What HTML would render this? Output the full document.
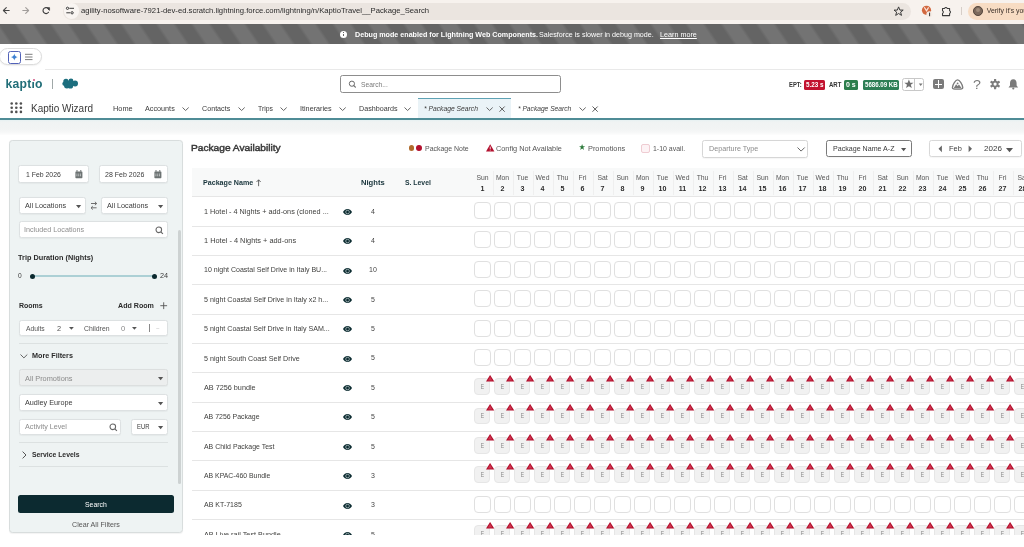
<!DOCTYPE html>
<html><head><meta charset="utf-8">
<style>
*{margin:0;padding:0;box-sizing:border-box}
html,body{width:1024px;height:547px;overflow:hidden;background:#fff;font-family:"Liberation Sans",sans-serif;color:#3e3e3c}
.a{position:absolute}
.t{position:absolute;white-space:nowrap;line-height:1}
svg{position:absolute;overflow:visible}
.inp{position:absolute;background:#fff;border:1px solid #dde1e2;border-radius:2.5px;box-shadow:0 0.5px 1px rgba(0,0,0,.04)}
.cell{position:absolute;width:16.8px;height:17px;border:1px solid #e0e0e0;border-radius:4px;background:#fff}
.ce{position:absolute;width:15.8px;height:16.8px;border-radius:4px;background:#f1f1f1;border:1px solid #e6e6e6}
.ce span{position:absolute;left:0.8px;right:0;top:3.8px;text-align:center;font-size:7px;line-height:1;color:#858585;transform:scaleX(0.72)}
.sep{position:absolute;height:1px;background:#e5e5e5}
body{filter:blur(0.3px)}
</style></head><body>

<div class="a" style="left:0px;top:0px;width:1024px;height:23.5px;background:#f7f2ee"></div>
<svg style="left:0px;top:0px" width="60" height="23"><g fill="none" stroke-linecap="round" stroke-linejoin="round"><path d="M9.2 10.5H3.6M6.3 7.7L3.4 10.5L6.3 13.3" stroke="#474747" stroke-width="1.1"/><path d="M22.8 10.5H28.4M25.7 7.7L28.6 10.5L25.7 13.3" stroke="#a19d9a" stroke-width="1.1"/><path d="M48.8 9.5A3 3 0 1 0 48.5 12.3" stroke="#3a3a3a" stroke-width="1.1"/><path d="M47 7.6L49.6 7.6L49.6 10.2Z" fill="#3a3a3a" stroke="#3a3a3a" stroke-width="0.5"/></g></svg>
<div class="a" style="left:63px;top:2.5px;width:848px;height:17px;border-radius:9px;background:#ebe5e0"></div>
<div class="a" style="left:63.5px;top:3px;width:15px;height:16px;border-radius:8px;background:#f9f5f2"></div>
<svg style="left:0px;top:0px" width="80" height="23"><g stroke="#3a3a3a" stroke-width="1" fill="none"><path d="M69.3 8.3H74M66.3 12.8H70.2"/><circle cx="67.5" cy="8.3" r="1.15"/><circle cx="72.1" cy="12.8" r="1.15"/></g></svg>
<div class="t" style="left:80.58px;top:7.00px;font-size:7.4px;color:#2a2a2a;transform:scaleX(1.0391);transform-origin:0 0;">agility-nosoftware-7921-dev-ed.scratch.lightning.force.com/lightning/n/KaptioTravel__Package_Search</div>
<svg style="left:893px;top:5.8px" width="12" height="11"><path d="M5.6 0.9L6.9 4.1H10.2L7.6 6.1L8.5 9.4L5.6 7.5L2.7 9.4L3.6 6.1L1 4.1H4.3Z" fill="none" stroke="#3a3a3a" stroke-width="1" stroke-linejoin="round"/></svg>
<svg style="left:920px;top:4px" width="14" height="15"><circle cx="6.5" cy="6.3" r="4.6" fill="#d2683f"/><path d="M4.3 3.2L6.5 6.8L8.6 3.4" stroke="#fbe3da" stroke-width="1.2" fill="none"/><circle cx="9.4" cy="10.2" r="3" fill="#f5ece6"/><rect x="9.1" y="8.6" width="1" height="3.6" fill="#333"/></svg>
<svg style="left:940px;top:5px" width="14" height="13"><path d="M2.5 3.4H4.6A1.4 1.4 0 0 1 7.2 3.4H9.6V5.8A1.4 1.4 0 0 1 9.6 8.4V10.6H2.5V8.4A1.4 1.4 0 0 0 2.5 5.8Z" fill="none" stroke="#3a3a3a" stroke-width="1.05" stroke-linejoin="round"/></svg>
<div class="a" style="left:960.6px;top:7px;width:0.8px;height:8px;background:#d6cec8"></div>
<div class="a" style="left:968px;top:2.5px;width:70px;height:17px;border-radius:9px;background:#f7dcc3"></div>
<div class="a" style="left:972.8px;top:5.8px;width:9.8px;height:9.8px;border-radius:50%;background:#7d6a5c;border:1px solid #4d3f36"></div>
<div class="a" style="left:975.6px;top:8px;width:4.2px;height:4.2px;border-radius:50%;background:#a08c7a"></div>
<div class="t" style="left:986.72px;top:8.00px;font-size:6.9px;color:#3a2f28;">Verify it's you</div>
<div class="a" style="left:0px;top:23.5px;width:1024px;height:20px;background:repeating-linear-gradient(56deg,#646464 -18.33px,#646464 -6.73px,#737373 -3.73px,#737373 7.97px,#646464 10.94px)"></div>
<div class="a" style="left:340.2px;top:30.6px;width:7px;height:7px;border-radius:50%;background:#fff"></div>
<div class="a" style="left:343.2px;top:33.6px;width:1px;height:2.9px;background:#666"></div>
<div class="a" style="left:343.2px;top:32.1px;width:1px;height:1px;background:#666"></div>
<div class="t" style="left:354.70px;top:32.00px;font-size:7.1px;font-weight:bold;color:#fff;transform:scaleX(1.0080);transform-origin:0 0;">Debug mode enabled for Lightning Web Components.</div>
<div class="t" style="left:539.30px;top:32.00px;font-size:7.1px;color:#fff;transform:scaleX(1.0070);transform-origin:0 0;">Salesforce is slower in debug mode.</div>
<div class="t" style="left:660.30px;top:32.00px;font-size:7.1px;color:#fff;transform:scaleX(1.0149);transform-origin:0 0;text-decoration:underline;">Learn more</div>
<div class="a" style="left:-1.5px;top:48px;width:43px;height:17px;border:1px solid #dcdcdc;border-radius:9px;background:#fff;box-shadow:0 1px 1.5px rgba(0,0,0,.06)"></div>
<div class="a" style="left:8px;top:50.5px;width:12.6px;height:13px;border:1.4px solid #5262b8;border-radius:2.4px;background:#fff"></div>
<svg style="left:0px;top:0px" width="40" height="70"><path d="M14.3 53.4Q14.8 56.5 17.8 57Q14.8 57.5 14.3 60.6Q13.8 57.5 10.8 57Q13.8 56.5 14.3 53.4Z" fill="#3f82d2"/><path d="M25 54.3H32.5M25 57H32.5M25 59.6H32.5" stroke="#505050" stroke-width="0.75"/></svg>
<div class="a" style="left:45px;top:69px;width:979px;height:1px;background:#e9e9e9"></div>
<div class="t" style="left:5.4px;top:78px;font-size:12.2px;font-weight:bold;color:#216e78;letter-spacing:0.25px">kaptio</div>
<div class="a" style="left:31.2px;top:78px;width:4px;height:3.9px;background:#fff"></div>
<div class="a" style="left:32.5px;top:79px;width:2px;height:2px;border-radius:50%;background:#cf4f7f"></div>
<div class="a" style="left:51.6px;top:79px;width:1px;height:10px;background:#a0a8a8"></div>
<svg style="left:58px;top:74px" width="26" height="20"><g fill="#1c6e7e"><circle cx="8.00" cy="7.40" r="2.7"/><circle cx="13.00" cy="7.00" r="2.4"/><circle cx="17.10" cy="9.50" r="2.9"/><circle cx="8.90" cy="11.60" r="2.9"/><circle cx="12.40" cy="11.90" r="2.7"/><circle cx="6.40" cy="9.80" r="2.1"/><circle cx="12.50" cy="9.50" r="3.2"/></g></svg>
<div class="a" style="left:339.5px;top:75.2px;width:221px;height:17.6px;border:1px solid #8d8d8d;border-radius:2.5px;background:#fff"></div>
<svg style="left:347.6px;top:80.2px" width="10" height="9"><circle cx="3.9" cy="3.7" r="2.6" fill="none" stroke="#6a6a6a" stroke-width="1"/><path d="M5.8 5.6L7.4 7.2" stroke="#6a6a6a" stroke-width="1.2" stroke-linecap="round"/></svg>
<div class="t" style="left:360.52px;top:82.00px;font-size:6.9px;color:#7a7a7a;transform:scaleX(0.9715);transform-origin:0 0;">Search...</div>
<div class="t" style="left:788.65px;top:82.00px;font-size:6.4px;font-weight:bold;color:#333;transform:scaleX(0.9206);transform-origin:0 0;">EPT:</div>
<div class="a" style="left:804px;top:80px;width:21px;height:10px;border-radius:1.5px;background:#c2122f"></div>
<div class="t" style="left:805.75px;top:82.00px;font-size:6.4px;font-weight:bold;color:#fff;transform:scaleX(0.9873);transform-origin:0 0;">5.23 s</div>
<div class="t" style="left:829.35px;top:82.00px;font-size:6.4px;font-weight:bold;color:#333;transform:scaleX(0.9403);transform-origin:0 0;">ART</div>
<div class="a" style="left:844.2px;top:80px;width:14px;height:10px;border-radius:1.5px;background:#2d7e4c"></div>
<div class="t" style="left:846.35px;top:82.00px;font-size:6.4px;font-weight:bold;color:#fff;transform:scaleX(1.0979);transform-origin:0 0;">0 s</div>
<div class="a" style="left:863.2px;top:80px;width:36px;height:10px;border-radius:1.5px;background:#2e7e55"></div>
<div class="t" style="left:864.85px;top:82.00px;font-size:6.4px;font-weight:bold;color:#fff;transform:scaleX(0.9593);transform-origin:0 0;">5686.09 KB</div>
<div class="a" style="left:902px;top:77.5px;width:22px;height:13px;border:1px solid #c8c8c8;border-radius:2.5px;background:#fff"></div>
<div class="a" style="left:914.2px;top:78px;width:0.8px;height:12px;background:#c8c8c8"></div>
<svg style="left:902px;top:77px" width="24" height="14"><path d="M6.9 2.4L8.2 5.7H11.5L8.8 7.8L9.8 11.1L6.9 9.2L4 11.1L5 7.8L2.3 5.7H5.6Z" fill="#6f6f6f"/><path d="M16.8 6.6H20.6L18.7 8.9Z" fill="#777"/></svg>
<div class="a" style="left:933.3px;top:78.6px;width:10.9px;height:10.9px;border-radius:2px;background:#7b7b7b"></div>
<div class="a" style="left:938.2px;top:80.4px;width:1.1px;height:7.3px;background:#fff"></div>
<div class="a" style="left:935.1px;top:83.5px;width:7.3px;height:1.1px;background:#fff"></div>
<svg style="left:951.8px;top:78.6px" width="12" height="11"><path d="M5.6 0.9C7.6 0.9 10.6 5.6 10.8 8.6C10.9 9.9 9.6 10.2 5.6 10.2C1.6 10.2 0.3 9.9 0.4 8.6C0.6 5.6 3.6 0.9 5.6 0.9Z" fill="none" stroke="#7b7b7b" stroke-width="1.3"/><path d="M1.6 9.2L4.1 5.3L5.6 7.1L7 5.4L9.7 9.2Z" fill="#7b7b7b"/><circle cx="5.6" cy="4.4" r="0.9" fill="#7b7b7b"/></svg>
<div class="t" style="left:973.16px;top:79.00px;font-size:12px;color:#7b7b7b;transform:scaleX(1.1897);transform-origin:0 0;">?</div>
<svg style="left:990px;top:78.6px" width="11" height="11"><g fill="#7b7b7b" transform="translate(5.1 5.1)"><rect x="-1.1" y="-5.2" width="2.2" height="2.6" rx="0.4" transform="rotate(0)"/><rect x="-1.1" y="-5.2" width="2.2" height="2.6" rx="0.4" transform="rotate(60)"/><rect x="-1.1" y="-5.2" width="2.2" height="2.6" rx="0.4" transform="rotate(120)"/><rect x="-1.1" y="-5.2" width="2.2" height="2.6" rx="0.4" transform="rotate(180)"/><rect x="-1.1" y="-5.2" width="2.2" height="2.6" rx="0.4" transform="rotate(240)"/><rect x="-1.1" y="-5.2" width="2.2" height="2.6" rx="0.4" transform="rotate(300)"/><circle r="3.4"/></g><circle cx="5.1" cy="5.1" r="1.6" fill="#fff"/></svg>
<svg style="left:1006.5px;top:78px" width="13" height="13"><path d="M6.3 1.2C8.7 1.2 9.6 3 9.6 5.3V7.6L11.1 9.4H1.5L3 7.6V5.3C3 3 3.9 1.2 6.3 1.2Z" fill="#7b7b7b"/><circle cx="6.3" cy="10.5" r="1.1" fill="#7b7b7b"/></svg>
<svg style="left:9px;top:100.8px" width="15" height="14"><g fill="#505050"><circle cx="2.7" cy="2.5" r="1.3"/><circle cx="2.7" cy="6.7" r="1.3"/><circle cx="2.7" cy="10.9" r="1.3"/><circle cx="7.3" cy="2.5" r="1.3"/><circle cx="7.3" cy="6.7" r="1.3"/><circle cx="7.3" cy="10.9" r="1.3"/><circle cx="11.9" cy="2.5" r="1.3"/><circle cx="11.9" cy="6.7" r="1.3"/><circle cx="11.9" cy="10.9" r="1.3"/></g></svg>
<div class="t" style="left:31.47px;top:104.00px;font-size:10.4px;color:#3a3a3a;transform:scaleX(0.9585);transform-origin:0 0;">Kaptio Wizard</div>
<div class="t" style="left:112.81px;top:105.00px;font-size:7px;color:#3a3a3a;transform:scaleX(1.0518);transform-origin:0 0;">Home</div>
<div class="t" style="left:145.41px;top:105.00px;font-size:7px;color:#3a3a3a;transform:scaleX(1.0329);transform-origin:0 0;">Accounts</div>
<svg style="left:182.4px;top:107px" width="8.2" height="5"><path d="M0.5 0.5L3.60 3.50L6.70 0.5" fill="none" stroke="#555" stroke-width="0.9"/></svg>
<div class="t" style="left:202.01px;top:105.00px;font-size:7px;color:#3a3a3a;transform:scaleX(1.0223);transform-origin:0 0;">Contacts</div>
<svg style="left:237.8px;top:107px" width="8.2" height="5"><path d="M0.5 0.5L3.60 3.50L6.70 0.5" fill="none" stroke="#555" stroke-width="0.9"/></svg>
<div class="t" style="left:257.71px;top:105.00px;font-size:7px;color:#3a3a3a;transform:scaleX(0.9767);transform-origin:0 0;">Trips</div>
<svg style="left:279.8px;top:107px" width="8.2" height="5"><path d="M0.5 0.5L3.60 3.50L6.70 0.5" fill="none" stroke="#555" stroke-width="0.9"/></svg>
<div class="t" style="left:300.21px;top:105.00px;font-size:7px;color:#3a3a3a;transform:scaleX(1.0327);transform-origin:0 0;">Itineraries</div>
<svg style="left:338.6px;top:107px" width="8.2" height="5"><path d="M0.5 0.5L3.60 3.50L6.70 0.5" fill="none" stroke="#555" stroke-width="0.9"/></svg>
<div class="t" style="left:358.81px;top:105.00px;font-size:7px;color:#3a3a3a;transform:scaleX(1.0210);transform-origin:0 0;">Dashboards</div>
<svg style="left:404.2px;top:107px" width="8.2" height="5"><path d="M0.5 0.5L3.60 3.50L6.70 0.5" fill="none" stroke="#555" stroke-width="0.9"/></svg>
<div class="a" style="left:418px;top:98px;width:93px;height:20.5px;background:#eaf3f7;border-top:1.6px solid #5ea2b4"></div>
<div class="t" style="left:424.31px;top:105.00px;font-size:7px;font-style:italic;color:#3a3a3a;transform:scaleX(0.9626);transform-origin:0 0;">* Package Search</div>
<svg style="left:485.90000000000003px;top:107px" width="8.2" height="5"><path d="M0.5 0.5L3.60 3.50L6.70 0.5" fill="none" stroke="#555" stroke-width="0.9"/></svg>
<svg style="left:498.6px;top:105.6px" width="7" height="7"><path d="M0.5 0.5L5.7 5.7M5.7 0.5L0.5 5.7" fill="none" stroke="#555" stroke-width="0.95"/></svg>
<div class="t" style="left:517.81px;top:105.00px;font-size:7px;font-style:italic;color:#3a3a3a;transform:scaleX(0.9501);transform-origin:0 0;">* Package Search</div>
<svg style="left:579.4px;top:107px" width="8.2" height="5"><path d="M0.5 0.5L3.60 3.50L6.70 0.5" fill="none" stroke="#555" stroke-width="0.9"/></svg>
<svg style="left:592.0999999999999px;top:105.6px" width="7" height="7"><path d="M0.5 0.5L5.7 5.7M5.7 0.5L0.5 5.7" fill="none" stroke="#555" stroke-width="0.95"/></svg>
<div class="a" style="left:0px;top:118.4px;width:1024px;height:1.8px;background:#4f8c96"></div>
<div class="a" style="left:0px;top:120.2px;width:1024px;height:14.5px;background:linear-gradient(#e6f0f2 0px,#f0f3f3 2px,#f2f4f4 9px,#f6f7f7 12px,#fcfcfc 14.5px)"></div>
<div class="a" style="left:9.4px;top:140.4px;width:173.8px;height:392.6px;background:#eef3f3;border:1px solid #d8dddd;border-radius:3.5px;box-shadow:0 0.5px 1px rgba(0,0,0,.05)"></div>
<div class="a" style="left:177.8px;top:230px;width:3.2px;height:254px;border-radius:2px;background:#cdd2d2"></div>
<div class="inp" style="left:18.4px;top:165.3px;width:70.2px;height:17.6px;"></div>
<div class="t" style="left:25.71px;top:171.00px;font-size:7px;color:#3a3a3a;transform:scaleX(0.9837);transform-origin:0 0;">1 Feb 2026</div>
<svg style="left:75px;top:170.2px" width="8" height="9"><rect x="0.4" y="1.4" width="7" height="6.8" rx="0.7" fill="#6d7373"/><rect x="1.5" y="0" width="1" height="1.8" fill="#6d7373"/><rect x="5.3" y="0" width="1" height="1.8" fill="#6d7373"/><g fill="#d8dcdc"><rect x="1.4" y="3.7" width="1" height="0.9"/><rect x="1.4" y="5.3" width="1" height="0.9"/><rect x="3.2" y="3.7" width="1" height="0.9"/><rect x="3.2" y="5.3" width="1" height="0.9"/><rect x="5.0" y="3.7" width="1" height="0.9"/><rect x="5.0" y="5.3" width="1" height="0.9"/></g></svg>
<div class="inp" style="left:98.6px;top:165.3px;width:69.6px;height:17.6px;"></div>
<div class="t" style="left:105.11px;top:171.00px;font-size:7px;color:#3a3a3a;transform:scaleX(1.0007);transform-origin:0 0;">28 Feb 2026</div>
<svg style="left:154.2px;top:170.2px" width="8" height="9"><rect x="0.4" y="1.4" width="7" height="6.8" rx="0.7" fill="#6d7373"/><rect x="1.5" y="0" width="1" height="1.8" fill="#6d7373"/><rect x="5.3" y="0" width="1" height="1.8" fill="#6d7373"/><g fill="#d8dcdc"><rect x="1.4" y="3.7" width="1" height="0.9"/><rect x="1.4" y="5.3" width="1" height="0.9"/><rect x="3.2" y="3.7" width="1" height="0.9"/><rect x="3.2" y="5.3" width="1" height="0.9"/><rect x="5.0" y="3.7" width="1" height="0.9"/><rect x="5.0" y="5.3" width="1" height="0.9"/></g></svg>
<div class="inp" style="left:18.7px;top:196.7px;width:67.4px;height:16.9px;"></div>
<div class="t" style="left:25.22px;top:203.00px;font-size:6.9px;color:#3a3a3a;transform:scaleX(1.0512);transform-origin:0 0;">All Locations</div>
<svg style="left:76px;top:204.8px" width="7" height="5"><path d="M0 0H5.2L2.62 3.2Z" fill="#555"/></svg>
<svg style="left:90px;top:201.3px" width="8" height="10"><path d="M1 2.5H6.6M4.9 0.8L6.7 2.5L4.9 4.2M6.6 6.8H1.1M2.8 5.1L1 6.8L2.8 8.5" fill="none" stroke="#666" stroke-width="0.95"/></svg>
<div class="inp" style="left:100.9px;top:196.7px;width:67.2px;height:16.9px;"></div>
<div class="t" style="left:107.32px;top:203.00px;font-size:6.9px;color:#3a3a3a;transform:scaleX(1.0512);transform-origin:0 0;">All Locations</div>
<svg style="left:157.8px;top:204.8px" width="7" height="5"><path d="M0 0H5.2L2.62 3.2Z" fill="#555"/></svg>
<div class="inp" style="left:18.6px;top:221.4px;width:149.6px;height:17.1px;"></div>
<div class="t" style="left:24.31px;top:226.00px;font-size:7px;color:#8f8f8f;transform:scaleX(1.0302);transform-origin:0 0;">Included Locations</div>
<svg style="left:155.2px;top:225.6px" width="9" height="9"><circle cx="3.8" cy="3.8" r="2.8" fill="none" stroke="#666" stroke-width="1.05"/><path d="M5.8 5.8L7.9 7.9" stroke="#666" stroke-width="1.2"/></svg>
<div class="t" style="left:18.30px;top:255.00px;font-size:7.1px;font-weight:bold;color:#2b2b2b;transform:scaleX(1.0313);transform-origin:0 0;">Trip Duration (Nights)</div>
<div class="t" style="left:18.34px;top:273.00px;font-size:6.6px;color:#3a3a3a;transform:scaleX(1.0058);transform-origin:0 0;">0</div>
<div class="a" style="left:32px;top:275.4px;width:122.4px;height:1.6px;background:#acd0d5"></div>
<div class="a" style="left:29.6px;top:273.6px;width:5px;height:5px;border-radius:50%;background:#0a292e"></div>
<div class="a" style="left:151.9px;top:273.6px;width:5px;height:5px;border-radius:50%;background:#0a292e"></div>
<div class="t" style="left:160.34px;top:273.00px;font-size:6.6px;color:#3a3a3a;transform:scaleX(1.1022);transform-origin:0 0;">24</div>
<div class="t" style="left:18.61px;top:302.00px;font-size:7px;font-weight:bold;color:#2b2b2b;transform:scaleX(1.0007);transform-origin:0 0;">Rooms</div>
<div class="t" style="left:117.91px;top:302.00px;font-size:7px;font-weight:bold;color:#2b2b2b;transform:scaleX(1.0157);transform-origin:0 0;">Add Room</div>
<svg style="left:159.6px;top:301.8px" width="8" height="8"><path d="M3.7 0.3V7.1M0.3 3.7H7.1" stroke="#555" stroke-width="0.9"/></svg>
<div class="inp" style="left:18.6px;top:319.8px;width:149.4px;height:16.2px;"></div>
<div class="t" style="left:26.32px;top:326.00px;font-size:6.8px;color:#555;transform:scaleX(0.9903);transform-origin:0 0;">Adults</div>
<div class="t" style="left:57.42px;top:326.00px;font-size:6.8px;color:#555;transform:scaleX(1.0883);transform-origin:0 0;">2</div>
<svg style="left:68.6px;top:326.8px" width="7" height="5"><path d="M0 0H4.8L2.38 2.8Z" fill="#555"/></svg>
<div class="t" style="left:83.52px;top:326.00px;font-size:6.8px;color:#555;transform:scaleX(1.0075);transform-origin:0 0;">Children</div>
<div class="t" style="left:120.72px;top:326.00px;font-size:6.8px;color:#888;transform:scaleX(1.1148);transform-origin:0 0;">0</div>
<svg style="left:132.2px;top:326.8px" width="7" height="5"><path d="M0 0H4.8L2.38 2.8Z" fill="#555"/></svg>
<div class="a" style="left:149.1px;top:324.3px;width:0.9px;height:7.5px;background:#8a8a8a"></div>
<div class="t" style="left:156.08px;top:325.00px;font-size:6px;color:#c8c8c8;">~</div>
<div class="a" style="left:18.6px;top:343px;width:149.4px;height:1px;background:#dce1e1"></div>
<svg style="left:20.2px;top:354.2px" width="8.8" height="5.4"><path d="M0.5 0.5L3.90 3.90L7.30 0.5" fill="none" stroke="#555" stroke-width="0.9"/></svg>
<div class="t" style="left:32.40px;top:353.00px;font-size:7.1px;font-weight:bold;color:#2b2b2b;transform:scaleX(1.0176);transform-origin:0 0;">More Filters</div>
<div class="inp" style="left:18.6px;top:369.2px;width:149.4px;height:17.2px;background:#eceeee;border-color:#dcdfdf"></div>
<div class="t" style="left:25.01px;top:375.00px;font-size:7px;color:#8b8b8b;transform:scaleX(1.0534);transform-origin:0 0;">All Promotions</div>
<svg style="left:157.6px;top:377px" width="7" height="5"><path d="M0 0H5.2L2.62 3.2Z" fill="#555"/></svg>
<div class="inp" style="left:18.6px;top:393.8px;width:149.4px;height:17.4px;"></div>
<div class="t" style="left:25.00px;top:400.00px;font-size:7.1px;color:#3a3a3a;transform:scaleX(1.0209);transform-origin:0 0;">Audley Europe</div>
<svg style="left:157.6px;top:401.6px" width="7" height="5"><path d="M0 0H5.2L2.62 3.2Z" fill="#555"/></svg>
<div class="inp" style="left:18.6px;top:418.6px;width:102px;height:16.9px;"></div>
<div class="t" style="left:24.71px;top:423.00px;font-size:7px;color:#8b8b8b;transform:scaleX(1.0267);transform-origin:0 0;">Activity Level</div>
<svg style="left:109.2px;top:422.6px" width="9" height="9"><circle cx="3.8" cy="3.8" r="2.8" fill="none" stroke="#666" stroke-width="1.05"/><path d="M5.8 5.8L7.9 7.9" stroke="#666" stroke-width="1.2"/></svg>
<div class="inp" style="left:130.7px;top:418.6px;width:37.4px;height:16.9px;"></div>
<div class="t" style="left:136.51px;top:423.00px;font-size:7px;color:#3a3a3a;transform:scaleX(0.8417);transform-origin:0 0;">EUR</div>
<svg style="left:157.6px;top:425.6px" width="7" height="5"><path d="M0 0H5.2L2.62 3.2Z" fill="#555"/></svg>
<div class="a" style="left:18.6px;top:442.3px;width:149.4px;height:1px;background:#dce1e1"></div>
<svg style="left:22px;top:450.6px" width="5" height="9"><path d="M0.6 0.6L4 4L0.6 7.4" fill="none" stroke="#555" stroke-width="1"/></svg>
<div class="t" style="left:32.31px;top:451.00px;font-size:7px;font-weight:bold;color:#2b2b2b;transform:scaleX(0.9752);transform-origin:0 0;">Service Levels</div>
<div class="a" style="left:18.6px;top:466.4px;width:149.4px;height:1px;background:#dce1e1"></div>
<div class="a" style="left:18px;top:495.4px;width:156px;height:17.4px;border-radius:2.5px;background:#0c2a30"></div>
<div class="t" style="left:85.11px;top:501.00px;font-size:7px;color:#fff;transform:scaleX(0.9802);transform-origin:0 0;">Search</div>
<div class="t" style="left:72.20px;top:522.00px;font-size:7.1px;color:#555;transform:scaleX(1.0044);transform-origin:0 0;">Clear All Filters</div>
<div class="t" style="left:191.33px;top:143.00px;font-size:9.6px;color:#383838;transform:scaleX(1.0599);transform-origin:0 0;-webkit-text-stroke:0.45px #383838;">Package Availability</div>
<div class="a" style="left:408.6px;top:145.2px;width:5.8px;height:5.8px;border-radius:50%;background:#b06b2c"></div>
<div class="a" style="left:416.4px;top:145.2px;width:5.8px;height:5.8px;border-radius:50%;background:#b3102e"></div>
<div class="t" style="left:425.30px;top:146.00px;font-size:7.1px;color:#555;transform:scaleX(0.9810);transform-origin:0 0;">Package Note</div>
<svg style="left:485.6px;top:143.9px" width="9" height="8"><path d="M4.2 0.2L8.4 7.4H0Z" fill="#b3102e"/><rect x="3.8" y="2.6" width="0.8" height="2.5" fill="#fff"/><rect x="3.8" y="5.7" width="0.8" height="0.8" fill="#fff"/></svg>
<div class="t" style="left:496.10px;top:146.00px;font-size:7.1px;color:#555;transform:scaleX(1.0335);transform-origin:0 0;">Config Not Available</div>
<svg style="left:578.8px;top:144.2px" width="7" height="7"><path d="M3.1 0.1L3.9 2.3H6.2L4.3 3.6L5 5.9L3.1 4.5L1.2 5.9L1.9 3.6L0 2.3H2.3Z" fill="#2c7a3a"/></svg>
<div class="t" style="left:587.80px;top:146.00px;font-size:7.1px;color:#555;transform:scaleX(1.0374);transform-origin:0 0;">Promotions</div>
<div class="a" style="left:641.4px;top:144.4px;width:8.6px;height:9px;border-radius:2px;background:#fdf3f5;border:1px solid #efccd2"></div>
<div class="t" style="left:653.40px;top:146.00px;font-size:7.1px;color:#555;transform:scaleX(0.9815);transform-origin:0 0;">1-10 avail.</div>
<div class="inp" style="left:702px;top:140.1px;width:106.3px;height:17.8px;border-color:#d6d6d6"></div>
<div class="t" style="left:708.50px;top:146.00px;font-size:7.1px;color:#8b8b8b;transform:scaleX(1.0111);transform-origin:0 0;">Departure Type</div>
<svg style="left:796.8px;top:147px" width="9.2" height="5.6"><path d="M0.5 0.5L4.10 4.10L7.70 0.5" fill="none" stroke="#666" stroke-width="1"/></svg>
<div class="inp" style="left:825.6px;top:140.4px;width:86px;height:17.1px;border-color:#7a7a7a"></div>
<div class="t" style="left:832.50px;top:146.00px;font-size:7.1px;color:#3a3a3a;transform:scaleX(0.9998);transform-origin:0 0;">Package Name A-Z</div>
<svg style="left:900.7px;top:147.6px" width="7" height="5"><path d="M0 0H5.2L2.62 3.2Z" fill="#555"/></svg>
<div class="inp" style="left:928.6px;top:140.4px;width:93.6px;height:17.1px;border-color:#d8d8d8"></div>
<svg style="left:938.3px;top:145.3px" width="5" height="8"><path d="M3.9 0.4V7.2L0.5 3.8Z" fill="#666"/></svg>
<div class="t" style="left:949.00px;top:146.00px;font-size:7.1px;color:#3a3a3a;transform:scaleX(1.0423);transform-origin:0 0;">Feb</div>
<svg style="left:967.6px;top:145.3px" width="5" height="8"><path d="M0.6 0.4V7.2L4 3.8Z" fill="#666"/></svg>
<div class="t" style="left:983.80px;top:146.00px;font-size:7.1px;color:#3a3a3a;transform:scaleX(1.1302);transform-origin:0 0;">2026</div>
<svg style="left:1006.2px;top:147.5px" width="7" height="5"><path d="M0 0H7.0L3.50 4.2Z" fill="#555"/></svg>
<div class="a" style="left:192px;top:168px;width:832px;height:28.5px;background:#f8f9f9"></div>
<div class="a" style="left:192px;top:196px;width:832px;height:1px;background:#e4e4e4"></div>
<div class="t" style="left:202.82px;top:180.00px;font-size:6.9px;font-weight:bold;color:#17333a;transform:scaleX(1.0310);transform-origin:0 0;">Package Name</div>
<svg style="left:256.2px;top:179.2px" width="6" height="8"><path d="M2.6 7.2V0.9M0.5 3L2.6 0.8L4.7 3" fill="none" stroke="#444" stroke-width="0.8"/></svg>
<div class="t" style="left:360.70px;top:180.00px;font-size:7.1px;font-weight:bold;color:#17333a;transform:scaleX(1.0708);transform-origin:0 0;">Nights</div>
<div class="t" style="left:404.50px;top:180.00px;font-size:7.1px;font-weight:bold;color:#17333a;transform:scaleX(0.9633);transform-origin:0 0;">S. Level</div>
<div class="t" style="left:476.45px;top:175.00px;font-size:6.8px;color:#555;">Sun</div>
<div class="t" style="left:480.53px;top:186.00px;font-size:7.1px;font-weight:bold;color:#2b2b2b;">1</div>
<div class="a" style="left:492.5px;top:171px;width:0.8px;height:24px;background:#efefef"></div>
<div class="t" style="left:495.89px;top:175.00px;font-size:6.8px;color:#555;">Mon</div>
<div class="t" style="left:500.53px;top:186.00px;font-size:7.1px;font-weight:bold;color:#2b2b2b;">2</div>
<div class="a" style="left:512.5px;top:171px;width:0.8px;height:24px;background:#efefef"></div>
<div class="t" style="left:516.77px;top:175.00px;font-size:6.8px;color:#555;">Tue</div>
<div class="t" style="left:520.53px;top:186.00px;font-size:7.1px;font-weight:bold;color:#2b2b2b;">3</div>
<div class="a" style="left:532.5px;top:171px;width:0.8px;height:24px;background:#efefef"></div>
<div class="t" style="left:535.57px;top:175.00px;font-size:6.8px;color:#555;">Wed</div>
<div class="t" style="left:540.53px;top:186.00px;font-size:7.1px;font-weight:bold;color:#2b2b2b;">4</div>
<div class="a" style="left:552.5px;top:171px;width:0.8px;height:24px;background:#efefef"></div>
<div class="t" style="left:556.64px;top:175.00px;font-size:6.8px;color:#555;">Thu</div>
<div class="t" style="left:560.53px;top:186.00px;font-size:7.1px;font-weight:bold;color:#2b2b2b;">5</div>
<div class="a" style="left:572.5px;top:171px;width:0.8px;height:24px;background:#efefef"></div>
<div class="t" style="left:578.54px;top:175.00px;font-size:6.8px;color:#555;">Fri</div>
<div class="t" style="left:580.53px;top:186.00px;font-size:7.1px;font-weight:bold;color:#2b2b2b;">6</div>
<div class="a" style="left:592.5px;top:171px;width:0.8px;height:24px;background:#efefef"></div>
<div class="t" style="left:597.40px;top:175.00px;font-size:6.8px;color:#555;">Sat</div>
<div class="t" style="left:600.53px;top:186.00px;font-size:7.1px;font-weight:bold;color:#2b2b2b;">7</div>
<div class="a" style="left:612.5px;top:171px;width:0.8px;height:24px;background:#efefef"></div>
<div class="t" style="left:616.45px;top:175.00px;font-size:6.8px;color:#555;">Sun</div>
<div class="t" style="left:620.53px;top:186.00px;font-size:7.1px;font-weight:bold;color:#2b2b2b;">8</div>
<div class="a" style="left:632.5px;top:171px;width:0.8px;height:24px;background:#efefef"></div>
<div class="t" style="left:635.89px;top:175.00px;font-size:6.8px;color:#555;">Mon</div>
<div class="t" style="left:640.53px;top:186.00px;font-size:7.1px;font-weight:bold;color:#2b2b2b;">9</div>
<div class="a" style="left:652.5px;top:171px;width:0.8px;height:24px;background:#efefef"></div>
<div class="t" style="left:656.77px;top:175.00px;font-size:6.8px;color:#555;">Tue</div>
<div class="t" style="left:658.55px;top:186.00px;font-size:7.1px;font-weight:bold;color:#2b2b2b;">10</div>
<div class="a" style="left:672.5px;top:171px;width:0.8px;height:24px;background:#efefef"></div>
<div class="t" style="left:675.57px;top:175.00px;font-size:6.8px;color:#555;">Wed</div>
<div class="t" style="left:678.75px;top:186.00px;font-size:7.1px;font-weight:bold;color:#2b2b2b;">11</div>
<div class="a" style="left:692.5px;top:171px;width:0.8px;height:24px;background:#efefef"></div>
<div class="t" style="left:696.64px;top:175.00px;font-size:6.8px;color:#555;">Thu</div>
<div class="t" style="left:698.55px;top:186.00px;font-size:7.1px;font-weight:bold;color:#2b2b2b;">12</div>
<div class="a" style="left:712.5px;top:171px;width:0.8px;height:24px;background:#efefef"></div>
<div class="t" style="left:718.54px;top:175.00px;font-size:6.8px;color:#555;">Fri</div>
<div class="t" style="left:718.55px;top:186.00px;font-size:7.1px;font-weight:bold;color:#2b2b2b;">13</div>
<div class="a" style="left:732.5px;top:171px;width:0.8px;height:24px;background:#efefef"></div>
<div class="t" style="left:737.40px;top:175.00px;font-size:6.8px;color:#555;">Sat</div>
<div class="t" style="left:738.55px;top:186.00px;font-size:7.1px;font-weight:bold;color:#2b2b2b;">14</div>
<div class="a" style="left:752.5px;top:171px;width:0.8px;height:24px;background:#efefef"></div>
<div class="t" style="left:756.45px;top:175.00px;font-size:6.8px;color:#555;">Sun</div>
<div class="t" style="left:758.55px;top:186.00px;font-size:7.1px;font-weight:bold;color:#2b2b2b;">15</div>
<div class="a" style="left:772.5px;top:171px;width:0.8px;height:24px;background:#efefef"></div>
<div class="t" style="left:775.89px;top:175.00px;font-size:6.8px;color:#555;">Mon</div>
<div class="t" style="left:778.55px;top:186.00px;font-size:7.1px;font-weight:bold;color:#2b2b2b;">16</div>
<div class="a" style="left:792.5px;top:171px;width:0.8px;height:24px;background:#efefef"></div>
<div class="t" style="left:796.77px;top:175.00px;font-size:6.8px;color:#555;">Tue</div>
<div class="t" style="left:798.55px;top:186.00px;font-size:7.1px;font-weight:bold;color:#2b2b2b;">17</div>
<div class="a" style="left:812.5px;top:171px;width:0.8px;height:24px;background:#efefef"></div>
<div class="t" style="left:815.57px;top:175.00px;font-size:6.8px;color:#555;">Wed</div>
<div class="t" style="left:818.55px;top:186.00px;font-size:7.1px;font-weight:bold;color:#2b2b2b;">18</div>
<div class="a" style="left:832.5px;top:171px;width:0.8px;height:24px;background:#efefef"></div>
<div class="t" style="left:836.64px;top:175.00px;font-size:6.8px;color:#555;">Thu</div>
<div class="t" style="left:838.55px;top:186.00px;font-size:7.1px;font-weight:bold;color:#2b2b2b;">19</div>
<div class="a" style="left:852.5px;top:171px;width:0.8px;height:24px;background:#efefef"></div>
<div class="t" style="left:858.54px;top:175.00px;font-size:6.8px;color:#555;">Fri</div>
<div class="t" style="left:858.55px;top:186.00px;font-size:7.1px;font-weight:bold;color:#2b2b2b;">20</div>
<div class="a" style="left:872.5px;top:171px;width:0.8px;height:24px;background:#efefef"></div>
<div class="t" style="left:877.40px;top:175.00px;font-size:6.8px;color:#555;">Sat</div>
<div class="t" style="left:878.55px;top:186.00px;font-size:7.1px;font-weight:bold;color:#2b2b2b;">21</div>
<div class="a" style="left:892.5px;top:171px;width:0.8px;height:24px;background:#efefef"></div>
<div class="t" style="left:896.45px;top:175.00px;font-size:6.8px;color:#555;">Sun</div>
<div class="t" style="left:898.55px;top:186.00px;font-size:7.1px;font-weight:bold;color:#2b2b2b;">22</div>
<div class="a" style="left:912.5px;top:171px;width:0.8px;height:24px;background:#efefef"></div>
<div class="t" style="left:915.89px;top:175.00px;font-size:6.8px;color:#555;">Mon</div>
<div class="t" style="left:918.55px;top:186.00px;font-size:7.1px;font-weight:bold;color:#2b2b2b;">23</div>
<div class="a" style="left:932.5px;top:171px;width:0.8px;height:24px;background:#efefef"></div>
<div class="t" style="left:936.77px;top:175.00px;font-size:6.8px;color:#555;">Tue</div>
<div class="t" style="left:938.55px;top:186.00px;font-size:7.1px;font-weight:bold;color:#2b2b2b;">24</div>
<div class="a" style="left:952.5px;top:171px;width:0.8px;height:24px;background:#efefef"></div>
<div class="t" style="left:955.57px;top:175.00px;font-size:6.8px;color:#555;">Wed</div>
<div class="t" style="left:958.55px;top:186.00px;font-size:7.1px;font-weight:bold;color:#2b2b2b;">25</div>
<div class="a" style="left:972.5px;top:171px;width:0.8px;height:24px;background:#efefef"></div>
<div class="t" style="left:976.64px;top:175.00px;font-size:6.8px;color:#555;">Thu</div>
<div class="t" style="left:978.55px;top:186.00px;font-size:7.1px;font-weight:bold;color:#2b2b2b;">26</div>
<div class="a" style="left:992.5px;top:171px;width:0.8px;height:24px;background:#efefef"></div>
<div class="t" style="left:998.54px;top:175.00px;font-size:6.8px;color:#555;">Fri</div>
<div class="t" style="left:998.55px;top:186.00px;font-size:7.1px;font-weight:bold;color:#2b2b2b;">27</div>
<div class="a" style="left:1012.5px;top:171px;width:0.8px;height:24px;background:#efefef"></div>
<div class="t" style="left:1017.40px;top:175.00px;font-size:6.8px;color:#555;">Sat</div>
<div class="t" style="left:1018.55px;top:186.00px;font-size:7.1px;font-weight:bold;color:#2b2b2b;">28</div>
<div class="a" style="left:192px;top:196px;width:832px;height:338.5px;overflow:hidden">
<div class="a" style="left:0px;top:0px;width:832px;height:1px;background:#e6e6e6"></div>
<div class="t" style="left:11.80px;top:13.00px;font-size:7.1px;color:#3e3e3c;transform:scaleX(1.0255);transform-origin:0 0;">1 Hotel - 4 Nights + add-ons (cloned ...</div>
<svg style="left:151.1px;top:12.9px" width="10" height="7"><path d="M0 3.05C2 -0.95 7 -0.95 9 3.05C7 7.05 2 7.05 0 3.05Z" fill="#0b2b30"/><circle cx="4.5" cy="3.05" r="1.75" fill="none" stroke="#b5c2c4" stroke-width="0.85"/><circle cx="4.6" cy="3.05" r="1" fill="#0b2b30"/></svg>
<div class="t" style="left:178.95px;top:12.00px;font-size:7px;color:#444;">4</div>
<div class="cell" style="left:282.0px;top:6.10px"></div>
<div class="cell" style="left:302.0px;top:6.10px"></div>
<div class="cell" style="left:322.0px;top:6.10px"></div>
<div class="cell" style="left:342.0px;top:6.10px"></div>
<div class="cell" style="left:362.0px;top:6.10px"></div>
<div class="cell" style="left:382.0px;top:6.10px"></div>
<div class="cell" style="left:402.0px;top:6.10px"></div>
<div class="cell" style="left:422.0px;top:6.10px"></div>
<div class="cell" style="left:442.0px;top:6.10px"></div>
<div class="cell" style="left:462.0px;top:6.10px"></div>
<div class="cell" style="left:482.0px;top:6.10px"></div>
<div class="cell" style="left:502.0px;top:6.10px"></div>
<div class="cell" style="left:522.0px;top:6.10px"></div>
<div class="cell" style="left:542.0px;top:6.10px"></div>
<div class="cell" style="left:562.0px;top:6.10px"></div>
<div class="cell" style="left:582.0px;top:6.10px"></div>
<div class="cell" style="left:602.0px;top:6.10px"></div>
<div class="cell" style="left:622.0px;top:6.10px"></div>
<div class="cell" style="left:642.0px;top:6.10px"></div>
<div class="cell" style="left:662.0px;top:6.10px"></div>
<div class="cell" style="left:682.0px;top:6.10px"></div>
<div class="cell" style="left:702.0px;top:6.10px"></div>
<div class="cell" style="left:722.0px;top:6.10px"></div>
<div class="cell" style="left:742.0px;top:6.10px"></div>
<div class="cell" style="left:762.0px;top:6.10px"></div>
<div class="cell" style="left:782.0px;top:6.10px"></div>
<div class="cell" style="left:802.0px;top:6.10px"></div>
<div class="cell" style="left:822.0px;top:6.10px"></div>
<div class="a" style="left:0px;top:30px;width:832px;height:1px;background:#e6e6e6"></div>
<div class="t" style="left:11.80px;top:42.00px;font-size:7.1px;color:#3e3e3c;transform:scaleX(1.0401);transform-origin:0 0;">1 Hotel - 4 Nights + add-ons</div>
<svg style="left:151.1px;top:42.26px" width="10" height="7"><path d="M0 3.05C2 -0.95 7 -0.95 9 3.05C7 7.05 2 7.05 0 3.05Z" fill="#0b2b30"/><circle cx="4.5" cy="3.05" r="1.75" fill="none" stroke="#b5c2c4" stroke-width="0.85"/><circle cx="4.6" cy="3.05" r="1" fill="#0b2b30"/></svg>
<div class="t" style="left:178.95px;top:41.00px;font-size:7px;color:#444;">4</div>
<div class="cell" style="left:282.0px;top:35.46px"></div>
<div class="cell" style="left:302.0px;top:35.46px"></div>
<div class="cell" style="left:322.0px;top:35.46px"></div>
<div class="cell" style="left:342.0px;top:35.46px"></div>
<div class="cell" style="left:362.0px;top:35.46px"></div>
<div class="cell" style="left:382.0px;top:35.46px"></div>
<div class="cell" style="left:402.0px;top:35.46px"></div>
<div class="cell" style="left:422.0px;top:35.46px"></div>
<div class="cell" style="left:442.0px;top:35.46px"></div>
<div class="cell" style="left:462.0px;top:35.46px"></div>
<div class="cell" style="left:482.0px;top:35.46px"></div>
<div class="cell" style="left:502.0px;top:35.46px"></div>
<div class="cell" style="left:522.0px;top:35.46px"></div>
<div class="cell" style="left:542.0px;top:35.46px"></div>
<div class="cell" style="left:562.0px;top:35.46px"></div>
<div class="cell" style="left:582.0px;top:35.46px"></div>
<div class="cell" style="left:602.0px;top:35.46px"></div>
<div class="cell" style="left:622.0px;top:35.46px"></div>
<div class="cell" style="left:642.0px;top:35.46px"></div>
<div class="cell" style="left:662.0px;top:35.46px"></div>
<div class="cell" style="left:682.0px;top:35.46px"></div>
<div class="cell" style="left:702.0px;top:35.46px"></div>
<div class="cell" style="left:722.0px;top:35.46px"></div>
<div class="cell" style="left:742.0px;top:35.46px"></div>
<div class="cell" style="left:762.0px;top:35.46px"></div>
<div class="cell" style="left:782.0px;top:35.46px"></div>
<div class="cell" style="left:802.0px;top:35.46px"></div>
<div class="cell" style="left:822.0px;top:35.46px"></div>
<div class="a" style="left:0px;top:59px;width:832px;height:1px;background:#e6e6e6"></div>
<div class="t" style="left:11.80px;top:71.00px;font-size:7.1px;color:#3e3e3c;transform:scaleX(0.9907);transform-origin:0 0;">10 night Coastal Self Drive in Italy BU...</div>
<svg style="left:151.1px;top:71.62px" width="10" height="7"><path d="M0 3.05C2 -0.95 7 -0.95 9 3.05C7 7.05 2 7.05 0 3.05Z" fill="#0b2b30"/><circle cx="4.5" cy="3.05" r="1.75" fill="none" stroke="#b5c2c4" stroke-width="0.85"/><circle cx="4.6" cy="3.05" r="1" fill="#0b2b30"/></svg>
<div class="t" style="left:177.01px;top:70.00px;font-size:7px;color:#444;">10</div>
<div class="cell" style="left:282.0px;top:64.82px"></div>
<div class="cell" style="left:302.0px;top:64.82px"></div>
<div class="cell" style="left:322.0px;top:64.82px"></div>
<div class="cell" style="left:342.0px;top:64.82px"></div>
<div class="cell" style="left:362.0px;top:64.82px"></div>
<div class="cell" style="left:382.0px;top:64.82px"></div>
<div class="cell" style="left:402.0px;top:64.82px"></div>
<div class="cell" style="left:422.0px;top:64.82px"></div>
<div class="cell" style="left:442.0px;top:64.82px"></div>
<div class="cell" style="left:462.0px;top:64.82px"></div>
<div class="cell" style="left:482.0px;top:64.82px"></div>
<div class="cell" style="left:502.0px;top:64.82px"></div>
<div class="cell" style="left:522.0px;top:64.82px"></div>
<div class="cell" style="left:542.0px;top:64.82px"></div>
<div class="cell" style="left:562.0px;top:64.82px"></div>
<div class="cell" style="left:582.0px;top:64.82px"></div>
<div class="cell" style="left:602.0px;top:64.82px"></div>
<div class="cell" style="left:622.0px;top:64.82px"></div>
<div class="cell" style="left:642.0px;top:64.82px"></div>
<div class="cell" style="left:662.0px;top:64.82px"></div>
<div class="cell" style="left:682.0px;top:64.82px"></div>
<div class="cell" style="left:702.0px;top:64.82px"></div>
<div class="cell" style="left:722.0px;top:64.82px"></div>
<div class="cell" style="left:742.0px;top:64.82px"></div>
<div class="cell" style="left:762.0px;top:64.82px"></div>
<div class="cell" style="left:782.0px;top:64.82px"></div>
<div class="cell" style="left:802.0px;top:64.82px"></div>
<div class="cell" style="left:822.0px;top:64.82px"></div>
<div class="a" style="left:0px;top:88px;width:832px;height:1px;background:#e6e6e6"></div>
<div class="t" style="left:11.80px;top:101.00px;font-size:7.1px;color:#3e3e3c;transform:scaleX(1.0035);transform-origin:0 0;">5 night Coastal Self Drive in Italy x2 h...</div>
<svg style="left:151.1px;top:100.98px" width="10" height="7"><path d="M0 3.05C2 -0.95 7 -0.95 9 3.05C7 7.05 2 7.05 0 3.05Z" fill="#0b2b30"/><circle cx="4.5" cy="3.05" r="1.75" fill="none" stroke="#b5c2c4" stroke-width="0.85"/><circle cx="4.6" cy="3.05" r="1" fill="#0b2b30"/></svg>
<div class="t" style="left:178.95px;top:100.00px;font-size:7px;color:#444;">5</div>
<div class="cell" style="left:282.0px;top:94.18px"></div>
<div class="cell" style="left:302.0px;top:94.18px"></div>
<div class="cell" style="left:322.0px;top:94.18px"></div>
<div class="cell" style="left:342.0px;top:94.18px"></div>
<div class="cell" style="left:362.0px;top:94.18px"></div>
<div class="cell" style="left:382.0px;top:94.18px"></div>
<div class="cell" style="left:402.0px;top:94.18px"></div>
<div class="cell" style="left:422.0px;top:94.18px"></div>
<div class="cell" style="left:442.0px;top:94.18px"></div>
<div class="cell" style="left:462.0px;top:94.18px"></div>
<div class="cell" style="left:482.0px;top:94.18px"></div>
<div class="cell" style="left:502.0px;top:94.18px"></div>
<div class="cell" style="left:522.0px;top:94.18px"></div>
<div class="cell" style="left:542.0px;top:94.18px"></div>
<div class="cell" style="left:562.0px;top:94.18px"></div>
<div class="cell" style="left:582.0px;top:94.18px"></div>
<div class="cell" style="left:602.0px;top:94.18px"></div>
<div class="cell" style="left:622.0px;top:94.18px"></div>
<div class="cell" style="left:642.0px;top:94.18px"></div>
<div class="cell" style="left:662.0px;top:94.18px"></div>
<div class="cell" style="left:682.0px;top:94.18px"></div>
<div class="cell" style="left:702.0px;top:94.18px"></div>
<div class="cell" style="left:722.0px;top:94.18px"></div>
<div class="cell" style="left:742.0px;top:94.18px"></div>
<div class="cell" style="left:762.0px;top:94.18px"></div>
<div class="cell" style="left:782.0px;top:94.18px"></div>
<div class="cell" style="left:802.0px;top:94.18px"></div>
<div class="cell" style="left:822.0px;top:94.18px"></div>
<div class="a" style="left:0px;top:118px;width:832px;height:1px;background:#e6e6e6"></div>
<div class="t" style="left:11.80px;top:130.00px;font-size:7.1px;color:#3e3e3c;transform:scaleX(0.9998);transform-origin:0 0;">5 night Coastal Self Drive in Italy SAM...</div>
<svg style="left:151.1px;top:130.34px" width="10" height="7"><path d="M0 3.05C2 -0.95 7 -0.95 9 3.05C7 7.05 2 7.05 0 3.05Z" fill="#0b2b30"/><circle cx="4.5" cy="3.05" r="1.75" fill="none" stroke="#b5c2c4" stroke-width="0.85"/><circle cx="4.6" cy="3.05" r="1" fill="#0b2b30"/></svg>
<div class="t" style="left:178.95px;top:129.00px;font-size:7px;color:#444;">5</div>
<div class="cell" style="left:282.0px;top:123.54px"></div>
<div class="cell" style="left:302.0px;top:123.54px"></div>
<div class="cell" style="left:322.0px;top:123.54px"></div>
<div class="cell" style="left:342.0px;top:123.54px"></div>
<div class="cell" style="left:362.0px;top:123.54px"></div>
<div class="cell" style="left:382.0px;top:123.54px"></div>
<div class="cell" style="left:402.0px;top:123.54px"></div>
<div class="cell" style="left:422.0px;top:123.54px"></div>
<div class="cell" style="left:442.0px;top:123.54px"></div>
<div class="cell" style="left:462.0px;top:123.54px"></div>
<div class="cell" style="left:482.0px;top:123.54px"></div>
<div class="cell" style="left:502.0px;top:123.54px"></div>
<div class="cell" style="left:522.0px;top:123.54px"></div>
<div class="cell" style="left:542.0px;top:123.54px"></div>
<div class="cell" style="left:562.0px;top:123.54px"></div>
<div class="cell" style="left:582.0px;top:123.54px"></div>
<div class="cell" style="left:602.0px;top:123.54px"></div>
<div class="cell" style="left:622.0px;top:123.54px"></div>
<div class="cell" style="left:642.0px;top:123.54px"></div>
<div class="cell" style="left:662.0px;top:123.54px"></div>
<div class="cell" style="left:682.0px;top:123.54px"></div>
<div class="cell" style="left:702.0px;top:123.54px"></div>
<div class="cell" style="left:722.0px;top:123.54px"></div>
<div class="cell" style="left:742.0px;top:123.54px"></div>
<div class="cell" style="left:762.0px;top:123.54px"></div>
<div class="cell" style="left:782.0px;top:123.54px"></div>
<div class="cell" style="left:802.0px;top:123.54px"></div>
<div class="cell" style="left:822.0px;top:123.54px"></div>
<div class="a" style="left:0px;top:147px;width:832px;height:1px;background:#e6e6e6"></div>
<div class="t" style="left:11.80px;top:160.00px;font-size:7.1px;color:#3e3e3c;transform:scaleX(1.0078);transform-origin:0 0;">5 night South Coast Self Drive</div>
<svg style="left:151.1px;top:159.7px" width="10" height="7"><path d="M0 3.05C2 -0.95 7 -0.95 9 3.05C7 7.05 2 7.05 0 3.05Z" fill="#0b2b30"/><circle cx="4.5" cy="3.05" r="1.75" fill="none" stroke="#b5c2c4" stroke-width="0.85"/><circle cx="4.6" cy="3.05" r="1" fill="#0b2b30"/></svg>
<div class="t" style="left:178.95px;top:158.00px;font-size:7px;color:#444;">5</div>
<div class="cell" style="left:282.0px;top:152.90px"></div>
<div class="cell" style="left:302.0px;top:152.90px"></div>
<div class="cell" style="left:322.0px;top:152.90px"></div>
<div class="cell" style="left:342.0px;top:152.90px"></div>
<div class="cell" style="left:362.0px;top:152.90px"></div>
<div class="cell" style="left:382.0px;top:152.90px"></div>
<div class="cell" style="left:402.0px;top:152.90px"></div>
<div class="cell" style="left:422.0px;top:152.90px"></div>
<div class="cell" style="left:442.0px;top:152.90px"></div>
<div class="cell" style="left:462.0px;top:152.90px"></div>
<div class="cell" style="left:482.0px;top:152.90px"></div>
<div class="cell" style="left:502.0px;top:152.90px"></div>
<div class="cell" style="left:522.0px;top:152.90px"></div>
<div class="cell" style="left:542.0px;top:152.90px"></div>
<div class="cell" style="left:562.0px;top:152.90px"></div>
<div class="cell" style="left:582.0px;top:152.90px"></div>
<div class="cell" style="left:602.0px;top:152.90px"></div>
<div class="cell" style="left:622.0px;top:152.90px"></div>
<div class="cell" style="left:642.0px;top:152.90px"></div>
<div class="cell" style="left:662.0px;top:152.90px"></div>
<div class="cell" style="left:682.0px;top:152.90px"></div>
<div class="cell" style="left:702.0px;top:152.90px"></div>
<div class="cell" style="left:722.0px;top:152.90px"></div>
<div class="cell" style="left:742.0px;top:152.90px"></div>
<div class="cell" style="left:762.0px;top:152.90px"></div>
<div class="cell" style="left:782.0px;top:152.90px"></div>
<div class="cell" style="left:802.0px;top:152.90px"></div>
<div class="cell" style="left:822.0px;top:152.90px"></div>
<div class="a" style="left:0px;top:176px;width:832px;height:1px;background:#e6e6e6"></div>
<div class="t" style="left:11.80px;top:189.00px;font-size:7.1px;color:#3e3e3c;transform:scaleX(1.0221);transform-origin:0 0;">AB 7256 bundle</div>
<svg style="left:151.1px;top:189.06px" width="10" height="7"><path d="M0 3.05C2 -0.95 7 -0.95 9 3.05C7 7.05 2 7.05 0 3.05Z" fill="#0b2b30"/><circle cx="4.5" cy="3.05" r="1.75" fill="none" stroke="#b5c2c4" stroke-width="0.85"/><circle cx="4.6" cy="3.05" r="1" fill="#0b2b30"/></svg>
<div class="t" style="left:178.95px;top:188.00px;font-size:7px;color:#444;">5</div>
<div class="ce" style="left:282.3px;top:182.26px"><span>E</span></div>
<div class="ce" style="left:302.3px;top:182.26px"><span>E</span></div>
<div class="ce" style="left:322.3px;top:182.26px"><span>E</span></div>
<div class="ce" style="left:342.3px;top:182.26px"><span>E</span></div>
<div class="ce" style="left:362.3px;top:182.26px"><span>E</span></div>
<div class="ce" style="left:382.3px;top:182.26px"><span>E</span></div>
<div class="ce" style="left:402.3px;top:182.26px"><span>E</span></div>
<div class="ce" style="left:422.3px;top:182.26px"><span>E</span></div>
<div class="ce" style="left:442.3px;top:182.26px"><span>E</span></div>
<div class="ce" style="left:462.3px;top:182.26px"><span>E</span></div>
<div class="ce" style="left:482.3px;top:182.26px"><span>E</span></div>
<div class="ce" style="left:502.3px;top:182.26px"><span>E</span></div>
<div class="ce" style="left:522.3px;top:182.26px"><span>E</span></div>
<div class="ce" style="left:542.3px;top:182.26px"><span>E</span></div>
<div class="ce" style="left:562.3px;top:182.26px"><span>E</span></div>
<div class="ce" style="left:582.3px;top:182.26px"><span>E</span></div>
<div class="ce" style="left:602.3px;top:182.26px"><span>E</span></div>
<div class="ce" style="left:622.3px;top:182.26px"><span>E</span></div>
<div class="ce" style="left:642.3px;top:182.26px"><span>E</span></div>
<div class="ce" style="left:662.3px;top:182.26px"><span>E</span></div>
<div class="ce" style="left:682.3px;top:182.26px"><span>E</span></div>
<div class="ce" style="left:702.3px;top:182.26px"><span>E</span></div>
<div class="ce" style="left:722.3px;top:182.26px"><span>E</span></div>
<div class="ce" style="left:742.3px;top:182.26px"><span>E</span></div>
<div class="ce" style="left:762.3px;top:182.26px"><span>E</span></div>
<div class="ce" style="left:782.3px;top:182.26px"><span>E</span></div>
<div class="ce" style="left:802.3px;top:182.26px"><span>E</span></div>
<div class="ce" style="left:822.3px;top:182.26px"><span>E</span></div>
<svg style="left:293.7px;top:178.96px" width="9" height="8"><path d="M4.1 0L8.3 6.6H0Z" fill="#b10f2c"/><path d="M4.1 1.8L6.2 5.6H2Z" fill="#d0344f"/></svg>
<svg style="left:313.7px;top:178.96px" width="9" height="8"><path d="M4.1 0L8.3 6.6H0Z" fill="#b10f2c"/><path d="M4.1 1.8L6.2 5.6H2Z" fill="#d0344f"/></svg>
<svg style="left:333.7px;top:178.96px" width="9" height="8"><path d="M4.1 0L8.3 6.6H0Z" fill="#b10f2c"/><path d="M4.1 1.8L6.2 5.6H2Z" fill="#d0344f"/></svg>
<svg style="left:353.7px;top:178.96px" width="9" height="8"><path d="M4.1 0L8.3 6.6H0Z" fill="#b10f2c"/><path d="M4.1 1.8L6.2 5.6H2Z" fill="#d0344f"/></svg>
<svg style="left:373.7px;top:178.96px" width="9" height="8"><path d="M4.1 0L8.3 6.6H0Z" fill="#b10f2c"/><path d="M4.1 1.8L6.2 5.6H2Z" fill="#d0344f"/></svg>
<svg style="left:393.7px;top:178.96px" width="9" height="8"><path d="M4.1 0L8.3 6.6H0Z" fill="#b10f2c"/><path d="M4.1 1.8L6.2 5.6H2Z" fill="#d0344f"/></svg>
<svg style="left:413.7px;top:178.96px" width="9" height="8"><path d="M4.1 0L8.3 6.6H0Z" fill="#b10f2c"/><path d="M4.1 1.8L6.2 5.6H2Z" fill="#d0344f"/></svg>
<svg style="left:433.7px;top:178.96px" width="9" height="8"><path d="M4.1 0L8.3 6.6H0Z" fill="#b10f2c"/><path d="M4.1 1.8L6.2 5.6H2Z" fill="#d0344f"/></svg>
<svg style="left:453.7px;top:178.96px" width="9" height="8"><path d="M4.1 0L8.3 6.6H0Z" fill="#b10f2c"/><path d="M4.1 1.8L6.2 5.6H2Z" fill="#d0344f"/></svg>
<svg style="left:473.7px;top:178.96px" width="9" height="8"><path d="M4.1 0L8.3 6.6H0Z" fill="#b10f2c"/><path d="M4.1 1.8L6.2 5.6H2Z" fill="#d0344f"/></svg>
<svg style="left:493.7px;top:178.96px" width="9" height="8"><path d="M4.1 0L8.3 6.6H0Z" fill="#b10f2c"/><path d="M4.1 1.8L6.2 5.6H2Z" fill="#d0344f"/></svg>
<svg style="left:513.7px;top:178.96px" width="9" height="8"><path d="M4.1 0L8.3 6.6H0Z" fill="#b10f2c"/><path d="M4.1 1.8L6.2 5.6H2Z" fill="#d0344f"/></svg>
<svg style="left:533.7px;top:178.96px" width="9" height="8"><path d="M4.1 0L8.3 6.6H0Z" fill="#b10f2c"/><path d="M4.1 1.8L6.2 5.6H2Z" fill="#d0344f"/></svg>
<svg style="left:553.7px;top:178.96px" width="9" height="8"><path d="M4.1 0L8.3 6.6H0Z" fill="#b10f2c"/><path d="M4.1 1.8L6.2 5.6H2Z" fill="#d0344f"/></svg>
<svg style="left:573.7px;top:178.96px" width="9" height="8"><path d="M4.1 0L8.3 6.6H0Z" fill="#b10f2c"/><path d="M4.1 1.8L6.2 5.6H2Z" fill="#d0344f"/></svg>
<svg style="left:593.7px;top:178.96px" width="9" height="8"><path d="M4.1 0L8.3 6.6H0Z" fill="#b10f2c"/><path d="M4.1 1.8L6.2 5.6H2Z" fill="#d0344f"/></svg>
<svg style="left:613.7px;top:178.96px" width="9" height="8"><path d="M4.1 0L8.3 6.6H0Z" fill="#b10f2c"/><path d="M4.1 1.8L6.2 5.6H2Z" fill="#d0344f"/></svg>
<svg style="left:633.7px;top:178.96px" width="9" height="8"><path d="M4.1 0L8.3 6.6H0Z" fill="#b10f2c"/><path d="M4.1 1.8L6.2 5.6H2Z" fill="#d0344f"/></svg>
<svg style="left:653.7px;top:178.96px" width="9" height="8"><path d="M4.1 0L8.3 6.6H0Z" fill="#b10f2c"/><path d="M4.1 1.8L6.2 5.6H2Z" fill="#d0344f"/></svg>
<svg style="left:673.7px;top:178.96px" width="9" height="8"><path d="M4.1 0L8.3 6.6H0Z" fill="#b10f2c"/><path d="M4.1 1.8L6.2 5.6H2Z" fill="#d0344f"/></svg>
<svg style="left:693.7px;top:178.96px" width="9" height="8"><path d="M4.1 0L8.3 6.6H0Z" fill="#b10f2c"/><path d="M4.1 1.8L6.2 5.6H2Z" fill="#d0344f"/></svg>
<svg style="left:713.7px;top:178.96px" width="9" height="8"><path d="M4.1 0L8.3 6.6H0Z" fill="#b10f2c"/><path d="M4.1 1.8L6.2 5.6H2Z" fill="#d0344f"/></svg>
<svg style="left:733.7px;top:178.96px" width="9" height="8"><path d="M4.1 0L8.3 6.6H0Z" fill="#b10f2c"/><path d="M4.1 1.8L6.2 5.6H2Z" fill="#d0344f"/></svg>
<svg style="left:753.7px;top:178.96px" width="9" height="8"><path d="M4.1 0L8.3 6.6H0Z" fill="#b10f2c"/><path d="M4.1 1.8L6.2 5.6H2Z" fill="#d0344f"/></svg>
<svg style="left:773.7px;top:178.96px" width="9" height="8"><path d="M4.1 0L8.3 6.6H0Z" fill="#b10f2c"/><path d="M4.1 1.8L6.2 5.6H2Z" fill="#d0344f"/></svg>
<svg style="left:793.7px;top:178.96px" width="9" height="8"><path d="M4.1 0L8.3 6.6H0Z" fill="#b10f2c"/><path d="M4.1 1.8L6.2 5.6H2Z" fill="#d0344f"/></svg>
<svg style="left:813.7px;top:178.96px" width="9" height="8"><path d="M4.1 0L8.3 6.6H0Z" fill="#b10f2c"/><path d="M4.1 1.8L6.2 5.6H2Z" fill="#d0344f"/></svg>
<svg style="left:833.7px;top:178.96px" width="9" height="8"><path d="M4.1 0L8.3 6.6H0Z" fill="#b10f2c"/><path d="M4.1 1.8L6.2 5.6H2Z" fill="#d0344f"/></svg>
<div class="a" style="left:0px;top:206px;width:832px;height:1px;background:#e6e6e6"></div>
<div class="t" style="left:11.80px;top:218.00px;font-size:7.1px;color:#3e3e3c;transform:scaleX(0.9773);transform-origin:0 0;">AB 7256 Package</div>
<svg style="left:151.1px;top:218.42px" width="10" height="7"><path d="M0 3.05C2 -0.95 7 -0.95 9 3.05C7 7.05 2 7.05 0 3.05Z" fill="#0b2b30"/><circle cx="4.5" cy="3.05" r="1.75" fill="none" stroke="#b5c2c4" stroke-width="0.85"/><circle cx="4.6" cy="3.05" r="1" fill="#0b2b30"/></svg>
<div class="t" style="left:178.95px;top:217.00px;font-size:7px;color:#444;">5</div>
<div class="ce" style="left:282.3px;top:211.62px"><span>E</span></div>
<div class="ce" style="left:302.3px;top:211.62px"><span>E</span></div>
<div class="ce" style="left:322.3px;top:211.62px"><span>E</span></div>
<div class="ce" style="left:342.3px;top:211.62px"><span>E</span></div>
<div class="ce" style="left:362.3px;top:211.62px"><span>E</span></div>
<div class="ce" style="left:382.3px;top:211.62px"><span>E</span></div>
<div class="ce" style="left:402.3px;top:211.62px"><span>E</span></div>
<div class="ce" style="left:422.3px;top:211.62px"><span>E</span></div>
<div class="ce" style="left:442.3px;top:211.62px"><span>E</span></div>
<div class="ce" style="left:462.3px;top:211.62px"><span>E</span></div>
<div class="ce" style="left:482.3px;top:211.62px"><span>E</span></div>
<div class="ce" style="left:502.3px;top:211.62px"><span>E</span></div>
<div class="ce" style="left:522.3px;top:211.62px"><span>E</span></div>
<div class="ce" style="left:542.3px;top:211.62px"><span>E</span></div>
<div class="ce" style="left:562.3px;top:211.62px"><span>E</span></div>
<div class="ce" style="left:582.3px;top:211.62px"><span>E</span></div>
<div class="ce" style="left:602.3px;top:211.62px"><span>E</span></div>
<div class="ce" style="left:622.3px;top:211.62px"><span>E</span></div>
<div class="ce" style="left:642.3px;top:211.62px"><span>E</span></div>
<div class="ce" style="left:662.3px;top:211.62px"><span>E</span></div>
<div class="ce" style="left:682.3px;top:211.62px"><span>E</span></div>
<div class="ce" style="left:702.3px;top:211.62px"><span>E</span></div>
<div class="ce" style="left:722.3px;top:211.62px"><span>E</span></div>
<div class="ce" style="left:742.3px;top:211.62px"><span>E</span></div>
<div class="ce" style="left:762.3px;top:211.62px"><span>E</span></div>
<div class="ce" style="left:782.3px;top:211.62px"><span>E</span></div>
<div class="ce" style="left:802.3px;top:211.62px"><span>E</span></div>
<div class="ce" style="left:822.3px;top:211.62px"><span>E</span></div>
<svg style="left:293.7px;top:208.32px" width="9" height="8"><path d="M4.1 0L8.3 6.6H0Z" fill="#b10f2c"/><path d="M4.1 1.8L6.2 5.6H2Z" fill="#d0344f"/></svg>
<svg style="left:313.7px;top:208.32px" width="9" height="8"><path d="M4.1 0L8.3 6.6H0Z" fill="#b10f2c"/><path d="M4.1 1.8L6.2 5.6H2Z" fill="#d0344f"/></svg>
<svg style="left:333.7px;top:208.32px" width="9" height="8"><path d="M4.1 0L8.3 6.6H0Z" fill="#b10f2c"/><path d="M4.1 1.8L6.2 5.6H2Z" fill="#d0344f"/></svg>
<svg style="left:353.7px;top:208.32px" width="9" height="8"><path d="M4.1 0L8.3 6.6H0Z" fill="#b10f2c"/><path d="M4.1 1.8L6.2 5.6H2Z" fill="#d0344f"/></svg>
<svg style="left:373.7px;top:208.32px" width="9" height="8"><path d="M4.1 0L8.3 6.6H0Z" fill="#b10f2c"/><path d="M4.1 1.8L6.2 5.6H2Z" fill="#d0344f"/></svg>
<svg style="left:393.7px;top:208.32px" width="9" height="8"><path d="M4.1 0L8.3 6.6H0Z" fill="#b10f2c"/><path d="M4.1 1.8L6.2 5.6H2Z" fill="#d0344f"/></svg>
<svg style="left:413.7px;top:208.32px" width="9" height="8"><path d="M4.1 0L8.3 6.6H0Z" fill="#b10f2c"/><path d="M4.1 1.8L6.2 5.6H2Z" fill="#d0344f"/></svg>
<svg style="left:433.7px;top:208.32px" width="9" height="8"><path d="M4.1 0L8.3 6.6H0Z" fill="#b10f2c"/><path d="M4.1 1.8L6.2 5.6H2Z" fill="#d0344f"/></svg>
<svg style="left:453.7px;top:208.32px" width="9" height="8"><path d="M4.1 0L8.3 6.6H0Z" fill="#b10f2c"/><path d="M4.1 1.8L6.2 5.6H2Z" fill="#d0344f"/></svg>
<svg style="left:473.7px;top:208.32px" width="9" height="8"><path d="M4.1 0L8.3 6.6H0Z" fill="#b10f2c"/><path d="M4.1 1.8L6.2 5.6H2Z" fill="#d0344f"/></svg>
<svg style="left:493.7px;top:208.32px" width="9" height="8"><path d="M4.1 0L8.3 6.6H0Z" fill="#b10f2c"/><path d="M4.1 1.8L6.2 5.6H2Z" fill="#d0344f"/></svg>
<svg style="left:513.7px;top:208.32px" width="9" height="8"><path d="M4.1 0L8.3 6.6H0Z" fill="#b10f2c"/><path d="M4.1 1.8L6.2 5.6H2Z" fill="#d0344f"/></svg>
<svg style="left:533.7px;top:208.32px" width="9" height="8"><path d="M4.1 0L8.3 6.6H0Z" fill="#b10f2c"/><path d="M4.1 1.8L6.2 5.6H2Z" fill="#d0344f"/></svg>
<svg style="left:553.7px;top:208.32px" width="9" height="8"><path d="M4.1 0L8.3 6.6H0Z" fill="#b10f2c"/><path d="M4.1 1.8L6.2 5.6H2Z" fill="#d0344f"/></svg>
<svg style="left:573.7px;top:208.32px" width="9" height="8"><path d="M4.1 0L8.3 6.6H0Z" fill="#b10f2c"/><path d="M4.1 1.8L6.2 5.6H2Z" fill="#d0344f"/></svg>
<svg style="left:593.7px;top:208.32px" width="9" height="8"><path d="M4.1 0L8.3 6.6H0Z" fill="#b10f2c"/><path d="M4.1 1.8L6.2 5.6H2Z" fill="#d0344f"/></svg>
<svg style="left:613.7px;top:208.32px" width="9" height="8"><path d="M4.1 0L8.3 6.6H0Z" fill="#b10f2c"/><path d="M4.1 1.8L6.2 5.6H2Z" fill="#d0344f"/></svg>
<svg style="left:633.7px;top:208.32px" width="9" height="8"><path d="M4.1 0L8.3 6.6H0Z" fill="#b10f2c"/><path d="M4.1 1.8L6.2 5.6H2Z" fill="#d0344f"/></svg>
<svg style="left:653.7px;top:208.32px" width="9" height="8"><path d="M4.1 0L8.3 6.6H0Z" fill="#b10f2c"/><path d="M4.1 1.8L6.2 5.6H2Z" fill="#d0344f"/></svg>
<svg style="left:673.7px;top:208.32px" width="9" height="8"><path d="M4.1 0L8.3 6.6H0Z" fill="#b10f2c"/><path d="M4.1 1.8L6.2 5.6H2Z" fill="#d0344f"/></svg>
<svg style="left:693.7px;top:208.32px" width="9" height="8"><path d="M4.1 0L8.3 6.6H0Z" fill="#b10f2c"/><path d="M4.1 1.8L6.2 5.6H2Z" fill="#d0344f"/></svg>
<svg style="left:713.7px;top:208.32px" width="9" height="8"><path d="M4.1 0L8.3 6.6H0Z" fill="#b10f2c"/><path d="M4.1 1.8L6.2 5.6H2Z" fill="#d0344f"/></svg>
<svg style="left:733.7px;top:208.32px" width="9" height="8"><path d="M4.1 0L8.3 6.6H0Z" fill="#b10f2c"/><path d="M4.1 1.8L6.2 5.6H2Z" fill="#d0344f"/></svg>
<svg style="left:753.7px;top:208.32px" width="9" height="8"><path d="M4.1 0L8.3 6.6H0Z" fill="#b10f2c"/><path d="M4.1 1.8L6.2 5.6H2Z" fill="#d0344f"/></svg>
<svg style="left:773.7px;top:208.32px" width="9" height="8"><path d="M4.1 0L8.3 6.6H0Z" fill="#b10f2c"/><path d="M4.1 1.8L6.2 5.6H2Z" fill="#d0344f"/></svg>
<svg style="left:793.7px;top:208.32px" width="9" height="8"><path d="M4.1 0L8.3 6.6H0Z" fill="#b10f2c"/><path d="M4.1 1.8L6.2 5.6H2Z" fill="#d0344f"/></svg>
<svg style="left:813.7px;top:208.32px" width="9" height="8"><path d="M4.1 0L8.3 6.6H0Z" fill="#b10f2c"/><path d="M4.1 1.8L6.2 5.6H2Z" fill="#d0344f"/></svg>
<svg style="left:833.7px;top:208.32px" width="9" height="8"><path d="M4.1 0L8.3 6.6H0Z" fill="#b10f2c"/><path d="M4.1 1.8L6.2 5.6H2Z" fill="#d0344f"/></svg>
<div class="a" style="left:0px;top:235px;width:832px;height:1px;background:#e6e6e6"></div>
<div class="t" style="left:11.80px;top:248.00px;font-size:7.1px;color:#3e3e3c;transform:scaleX(0.9772);transform-origin:0 0;">AB Child Package Test</div>
<svg style="left:151.1px;top:247.78px" width="10" height="7"><path d="M0 3.05C2 -0.95 7 -0.95 9 3.05C7 7.05 2 7.05 0 3.05Z" fill="#0b2b30"/><circle cx="4.5" cy="3.05" r="1.75" fill="none" stroke="#b5c2c4" stroke-width="0.85"/><circle cx="4.6" cy="3.05" r="1" fill="#0b2b30"/></svg>
<div class="t" style="left:178.95px;top:247.00px;font-size:7px;color:#444;">5</div>
<div class="ce" style="left:282.3px;top:240.98px"><span>E</span></div>
<div class="ce" style="left:302.3px;top:240.98px"><span>E</span></div>
<div class="ce" style="left:322.3px;top:240.98px"><span>E</span></div>
<div class="ce" style="left:342.3px;top:240.98px"><span>E</span></div>
<div class="ce" style="left:362.3px;top:240.98px"><span>E</span></div>
<div class="ce" style="left:382.3px;top:240.98px"><span>E</span></div>
<div class="ce" style="left:402.3px;top:240.98px"><span>E</span></div>
<div class="ce" style="left:422.3px;top:240.98px"><span>E</span></div>
<div class="ce" style="left:442.3px;top:240.98px"><span>E</span></div>
<div class="ce" style="left:462.3px;top:240.98px"><span>E</span></div>
<div class="ce" style="left:482.3px;top:240.98px"><span>E</span></div>
<div class="ce" style="left:502.3px;top:240.98px"><span>E</span></div>
<div class="ce" style="left:522.3px;top:240.98px"><span>E</span></div>
<div class="ce" style="left:542.3px;top:240.98px"><span>E</span></div>
<div class="ce" style="left:562.3px;top:240.98px"><span>E</span></div>
<div class="ce" style="left:582.3px;top:240.98px"><span>E</span></div>
<div class="ce" style="left:602.3px;top:240.98px"><span>E</span></div>
<div class="ce" style="left:622.3px;top:240.98px"><span>E</span></div>
<div class="ce" style="left:642.3px;top:240.98px"><span>E</span></div>
<div class="ce" style="left:662.3px;top:240.98px"><span>E</span></div>
<div class="ce" style="left:682.3px;top:240.98px"><span>E</span></div>
<div class="ce" style="left:702.3px;top:240.98px"><span>E</span></div>
<div class="ce" style="left:722.3px;top:240.98px"><span>E</span></div>
<div class="ce" style="left:742.3px;top:240.98px"><span>E</span></div>
<div class="ce" style="left:762.3px;top:240.98px"><span>E</span></div>
<div class="ce" style="left:782.3px;top:240.98px"><span>E</span></div>
<div class="ce" style="left:802.3px;top:240.98px"><span>E</span></div>
<div class="ce" style="left:822.3px;top:240.98px"><span>E</span></div>
<svg style="left:293.7px;top:237.68px" width="9" height="8"><path d="M4.1 0L8.3 6.6H0Z" fill="#b10f2c"/><path d="M4.1 1.8L6.2 5.6H2Z" fill="#d0344f"/></svg>
<svg style="left:313.7px;top:237.68px" width="9" height="8"><path d="M4.1 0L8.3 6.6H0Z" fill="#b10f2c"/><path d="M4.1 1.8L6.2 5.6H2Z" fill="#d0344f"/></svg>
<svg style="left:333.7px;top:237.68px" width="9" height="8"><path d="M4.1 0L8.3 6.6H0Z" fill="#b10f2c"/><path d="M4.1 1.8L6.2 5.6H2Z" fill="#d0344f"/></svg>
<svg style="left:353.7px;top:237.68px" width="9" height="8"><path d="M4.1 0L8.3 6.6H0Z" fill="#b10f2c"/><path d="M4.1 1.8L6.2 5.6H2Z" fill="#d0344f"/></svg>
<svg style="left:373.7px;top:237.68px" width="9" height="8"><path d="M4.1 0L8.3 6.6H0Z" fill="#b10f2c"/><path d="M4.1 1.8L6.2 5.6H2Z" fill="#d0344f"/></svg>
<svg style="left:393.7px;top:237.68px" width="9" height="8"><path d="M4.1 0L8.3 6.6H0Z" fill="#b10f2c"/><path d="M4.1 1.8L6.2 5.6H2Z" fill="#d0344f"/></svg>
<svg style="left:413.7px;top:237.68px" width="9" height="8"><path d="M4.1 0L8.3 6.6H0Z" fill="#b10f2c"/><path d="M4.1 1.8L6.2 5.6H2Z" fill="#d0344f"/></svg>
<svg style="left:433.7px;top:237.68px" width="9" height="8"><path d="M4.1 0L8.3 6.6H0Z" fill="#b10f2c"/><path d="M4.1 1.8L6.2 5.6H2Z" fill="#d0344f"/></svg>
<svg style="left:453.7px;top:237.68px" width="9" height="8"><path d="M4.1 0L8.3 6.6H0Z" fill="#b10f2c"/><path d="M4.1 1.8L6.2 5.6H2Z" fill="#d0344f"/></svg>
<svg style="left:473.7px;top:237.68px" width="9" height="8"><path d="M4.1 0L8.3 6.6H0Z" fill="#b10f2c"/><path d="M4.1 1.8L6.2 5.6H2Z" fill="#d0344f"/></svg>
<svg style="left:493.7px;top:237.68px" width="9" height="8"><path d="M4.1 0L8.3 6.6H0Z" fill="#b10f2c"/><path d="M4.1 1.8L6.2 5.6H2Z" fill="#d0344f"/></svg>
<svg style="left:513.7px;top:237.68px" width="9" height="8"><path d="M4.1 0L8.3 6.6H0Z" fill="#b10f2c"/><path d="M4.1 1.8L6.2 5.6H2Z" fill="#d0344f"/></svg>
<svg style="left:533.7px;top:237.68px" width="9" height="8"><path d="M4.1 0L8.3 6.6H0Z" fill="#b10f2c"/><path d="M4.1 1.8L6.2 5.6H2Z" fill="#d0344f"/></svg>
<svg style="left:553.7px;top:237.68px" width="9" height="8"><path d="M4.1 0L8.3 6.6H0Z" fill="#b10f2c"/><path d="M4.1 1.8L6.2 5.6H2Z" fill="#d0344f"/></svg>
<svg style="left:573.7px;top:237.68px" width="9" height="8"><path d="M4.1 0L8.3 6.6H0Z" fill="#b10f2c"/><path d="M4.1 1.8L6.2 5.6H2Z" fill="#d0344f"/></svg>
<svg style="left:593.7px;top:237.68px" width="9" height="8"><path d="M4.1 0L8.3 6.6H0Z" fill="#b10f2c"/><path d="M4.1 1.8L6.2 5.6H2Z" fill="#d0344f"/></svg>
<svg style="left:613.7px;top:237.68px" width="9" height="8"><path d="M4.1 0L8.3 6.6H0Z" fill="#b10f2c"/><path d="M4.1 1.8L6.2 5.6H2Z" fill="#d0344f"/></svg>
<svg style="left:633.7px;top:237.68px" width="9" height="8"><path d="M4.1 0L8.3 6.6H0Z" fill="#b10f2c"/><path d="M4.1 1.8L6.2 5.6H2Z" fill="#d0344f"/></svg>
<svg style="left:653.7px;top:237.68px" width="9" height="8"><path d="M4.1 0L8.3 6.6H0Z" fill="#b10f2c"/><path d="M4.1 1.8L6.2 5.6H2Z" fill="#d0344f"/></svg>
<svg style="left:673.7px;top:237.68px" width="9" height="8"><path d="M4.1 0L8.3 6.6H0Z" fill="#b10f2c"/><path d="M4.1 1.8L6.2 5.6H2Z" fill="#d0344f"/></svg>
<svg style="left:693.7px;top:237.68px" width="9" height="8"><path d="M4.1 0L8.3 6.6H0Z" fill="#b10f2c"/><path d="M4.1 1.8L6.2 5.6H2Z" fill="#d0344f"/></svg>
<svg style="left:713.7px;top:237.68px" width="9" height="8"><path d="M4.1 0L8.3 6.6H0Z" fill="#b10f2c"/><path d="M4.1 1.8L6.2 5.6H2Z" fill="#d0344f"/></svg>
<svg style="left:733.7px;top:237.68px" width="9" height="8"><path d="M4.1 0L8.3 6.6H0Z" fill="#b10f2c"/><path d="M4.1 1.8L6.2 5.6H2Z" fill="#d0344f"/></svg>
<svg style="left:753.7px;top:237.68px" width="9" height="8"><path d="M4.1 0L8.3 6.6H0Z" fill="#b10f2c"/><path d="M4.1 1.8L6.2 5.6H2Z" fill="#d0344f"/></svg>
<svg style="left:773.7px;top:237.68px" width="9" height="8"><path d="M4.1 0L8.3 6.6H0Z" fill="#b10f2c"/><path d="M4.1 1.8L6.2 5.6H2Z" fill="#d0344f"/></svg>
<svg style="left:793.7px;top:237.68px" width="9" height="8"><path d="M4.1 0L8.3 6.6H0Z" fill="#b10f2c"/><path d="M4.1 1.8L6.2 5.6H2Z" fill="#d0344f"/></svg>
<svg style="left:813.7px;top:237.68px" width="9" height="8"><path d="M4.1 0L8.3 6.6H0Z" fill="#b10f2c"/><path d="M4.1 1.8L6.2 5.6H2Z" fill="#d0344f"/></svg>
<svg style="left:833.7px;top:237.68px" width="9" height="8"><path d="M4.1 0L8.3 6.6H0Z" fill="#b10f2c"/><path d="M4.1 1.8L6.2 5.6H2Z" fill="#d0344f"/></svg>
<div class="a" style="left:0px;top:264px;width:832px;height:1px;background:#e6e6e6"></div>
<div class="t" style="left:11.80px;top:277.00px;font-size:7.1px;color:#3e3e3c;transform:scaleX(0.9695);transform-origin:0 0;">AB KPAC-460 Bundle</div>
<svg style="left:151.1px;top:277.14px" width="10" height="7"><path d="M0 3.05C2 -0.95 7 -0.95 9 3.05C7 7.05 2 7.05 0 3.05Z" fill="#0b2b30"/><circle cx="4.5" cy="3.05" r="1.75" fill="none" stroke="#b5c2c4" stroke-width="0.85"/><circle cx="4.6" cy="3.05" r="1" fill="#0b2b30"/></svg>
<div class="t" style="left:178.95px;top:276.00px;font-size:7px;color:#444;">3</div>
<div class="ce" style="left:282.3px;top:270.34px"><span>E</span></div>
<div class="ce" style="left:302.3px;top:270.34px"><span>E</span></div>
<div class="ce" style="left:322.3px;top:270.34px"><span>E</span></div>
<div class="ce" style="left:342.3px;top:270.34px"><span>E</span></div>
<div class="ce" style="left:362.3px;top:270.34px"><span>E</span></div>
<div class="ce" style="left:382.3px;top:270.34px"><span>E</span></div>
<div class="ce" style="left:402.3px;top:270.34px"><span>E</span></div>
<div class="ce" style="left:422.3px;top:270.34px"><span>E</span></div>
<div class="ce" style="left:442.3px;top:270.34px"><span>E</span></div>
<div class="ce" style="left:462.3px;top:270.34px"><span>E</span></div>
<div class="ce" style="left:482.3px;top:270.34px"><span>E</span></div>
<div class="ce" style="left:502.3px;top:270.34px"><span>E</span></div>
<div class="ce" style="left:522.3px;top:270.34px"><span>E</span></div>
<div class="ce" style="left:542.3px;top:270.34px"><span>E</span></div>
<div class="ce" style="left:562.3px;top:270.34px"><span>E</span></div>
<div class="ce" style="left:582.3px;top:270.34px"><span>E</span></div>
<div class="ce" style="left:602.3px;top:270.34px"><span>E</span></div>
<div class="ce" style="left:622.3px;top:270.34px"><span>E</span></div>
<div class="ce" style="left:642.3px;top:270.34px"><span>E</span></div>
<div class="ce" style="left:662.3px;top:270.34px"><span>E</span></div>
<div class="ce" style="left:682.3px;top:270.34px"><span>E</span></div>
<div class="ce" style="left:702.3px;top:270.34px"><span>E</span></div>
<div class="ce" style="left:722.3px;top:270.34px"><span>E</span></div>
<div class="ce" style="left:742.3px;top:270.34px"><span>E</span></div>
<div class="ce" style="left:762.3px;top:270.34px"><span>E</span></div>
<div class="ce" style="left:782.3px;top:270.34px"><span>E</span></div>
<div class="ce" style="left:802.3px;top:270.34px"><span>E</span></div>
<div class="ce" style="left:822.3px;top:270.34px"><span>E</span></div>
<svg style="left:293.7px;top:267.04px" width="9" height="8"><path d="M4.1 0L8.3 6.6H0Z" fill="#b10f2c"/><path d="M4.1 1.8L6.2 5.6H2Z" fill="#d0344f"/></svg>
<svg style="left:313.7px;top:267.04px" width="9" height="8"><path d="M4.1 0L8.3 6.6H0Z" fill="#b10f2c"/><path d="M4.1 1.8L6.2 5.6H2Z" fill="#d0344f"/></svg>
<svg style="left:333.7px;top:267.04px" width="9" height="8"><path d="M4.1 0L8.3 6.6H0Z" fill="#b10f2c"/><path d="M4.1 1.8L6.2 5.6H2Z" fill="#d0344f"/></svg>
<svg style="left:353.7px;top:267.04px" width="9" height="8"><path d="M4.1 0L8.3 6.6H0Z" fill="#b10f2c"/><path d="M4.1 1.8L6.2 5.6H2Z" fill="#d0344f"/></svg>
<svg style="left:373.7px;top:267.04px" width="9" height="8"><path d="M4.1 0L8.3 6.6H0Z" fill="#b10f2c"/><path d="M4.1 1.8L6.2 5.6H2Z" fill="#d0344f"/></svg>
<svg style="left:393.7px;top:267.04px" width="9" height="8"><path d="M4.1 0L8.3 6.6H0Z" fill="#b10f2c"/><path d="M4.1 1.8L6.2 5.6H2Z" fill="#d0344f"/></svg>
<svg style="left:413.7px;top:267.04px" width="9" height="8"><path d="M4.1 0L8.3 6.6H0Z" fill="#b10f2c"/><path d="M4.1 1.8L6.2 5.6H2Z" fill="#d0344f"/></svg>
<svg style="left:433.7px;top:267.04px" width="9" height="8"><path d="M4.1 0L8.3 6.6H0Z" fill="#b10f2c"/><path d="M4.1 1.8L6.2 5.6H2Z" fill="#d0344f"/></svg>
<svg style="left:453.7px;top:267.04px" width="9" height="8"><path d="M4.1 0L8.3 6.6H0Z" fill="#b10f2c"/><path d="M4.1 1.8L6.2 5.6H2Z" fill="#d0344f"/></svg>
<svg style="left:473.7px;top:267.04px" width="9" height="8"><path d="M4.1 0L8.3 6.6H0Z" fill="#b10f2c"/><path d="M4.1 1.8L6.2 5.6H2Z" fill="#d0344f"/></svg>
<svg style="left:493.7px;top:267.04px" width="9" height="8"><path d="M4.1 0L8.3 6.6H0Z" fill="#b10f2c"/><path d="M4.1 1.8L6.2 5.6H2Z" fill="#d0344f"/></svg>
<svg style="left:513.7px;top:267.04px" width="9" height="8"><path d="M4.1 0L8.3 6.6H0Z" fill="#b10f2c"/><path d="M4.1 1.8L6.2 5.6H2Z" fill="#d0344f"/></svg>
<svg style="left:533.7px;top:267.04px" width="9" height="8"><path d="M4.1 0L8.3 6.6H0Z" fill="#b10f2c"/><path d="M4.1 1.8L6.2 5.6H2Z" fill="#d0344f"/></svg>
<svg style="left:553.7px;top:267.04px" width="9" height="8"><path d="M4.1 0L8.3 6.6H0Z" fill="#b10f2c"/><path d="M4.1 1.8L6.2 5.6H2Z" fill="#d0344f"/></svg>
<svg style="left:573.7px;top:267.04px" width="9" height="8"><path d="M4.1 0L8.3 6.6H0Z" fill="#b10f2c"/><path d="M4.1 1.8L6.2 5.6H2Z" fill="#d0344f"/></svg>
<svg style="left:593.7px;top:267.04px" width="9" height="8"><path d="M4.1 0L8.3 6.6H0Z" fill="#b10f2c"/><path d="M4.1 1.8L6.2 5.6H2Z" fill="#d0344f"/></svg>
<svg style="left:613.7px;top:267.04px" width="9" height="8"><path d="M4.1 0L8.3 6.6H0Z" fill="#b10f2c"/><path d="M4.1 1.8L6.2 5.6H2Z" fill="#d0344f"/></svg>
<svg style="left:633.7px;top:267.04px" width="9" height="8"><path d="M4.1 0L8.3 6.6H0Z" fill="#b10f2c"/><path d="M4.1 1.8L6.2 5.6H2Z" fill="#d0344f"/></svg>
<svg style="left:653.7px;top:267.04px" width="9" height="8"><path d="M4.1 0L8.3 6.6H0Z" fill="#b10f2c"/><path d="M4.1 1.8L6.2 5.6H2Z" fill="#d0344f"/></svg>
<svg style="left:673.7px;top:267.04px" width="9" height="8"><path d="M4.1 0L8.3 6.6H0Z" fill="#b10f2c"/><path d="M4.1 1.8L6.2 5.6H2Z" fill="#d0344f"/></svg>
<svg style="left:693.7px;top:267.04px" width="9" height="8"><path d="M4.1 0L8.3 6.6H0Z" fill="#b10f2c"/><path d="M4.1 1.8L6.2 5.6H2Z" fill="#d0344f"/></svg>
<svg style="left:713.7px;top:267.04px" width="9" height="8"><path d="M4.1 0L8.3 6.6H0Z" fill="#b10f2c"/><path d="M4.1 1.8L6.2 5.6H2Z" fill="#d0344f"/></svg>
<svg style="left:733.7px;top:267.04px" width="9" height="8"><path d="M4.1 0L8.3 6.6H0Z" fill="#b10f2c"/><path d="M4.1 1.8L6.2 5.6H2Z" fill="#d0344f"/></svg>
<svg style="left:753.7px;top:267.04px" width="9" height="8"><path d="M4.1 0L8.3 6.6H0Z" fill="#b10f2c"/><path d="M4.1 1.8L6.2 5.6H2Z" fill="#d0344f"/></svg>
<svg style="left:773.7px;top:267.04px" width="9" height="8"><path d="M4.1 0L8.3 6.6H0Z" fill="#b10f2c"/><path d="M4.1 1.8L6.2 5.6H2Z" fill="#d0344f"/></svg>
<svg style="left:793.7px;top:267.04px" width="9" height="8"><path d="M4.1 0L8.3 6.6H0Z" fill="#b10f2c"/><path d="M4.1 1.8L6.2 5.6H2Z" fill="#d0344f"/></svg>
<svg style="left:813.7px;top:267.04px" width="9" height="8"><path d="M4.1 0L8.3 6.6H0Z" fill="#b10f2c"/><path d="M4.1 1.8L6.2 5.6H2Z" fill="#d0344f"/></svg>
<svg style="left:833.7px;top:267.04px" width="9" height="8"><path d="M4.1 0L8.3 6.6H0Z" fill="#b10f2c"/><path d="M4.1 1.8L6.2 5.6H2Z" fill="#d0344f"/></svg>
<div class="a" style="left:0px;top:294px;width:832px;height:1px;background:#e6e6e6"></div>
<div class="t" style="left:11.80px;top:306.00px;font-size:7.1px;color:#3e3e3c;transform:scaleX(0.9887);transform-origin:0 0;">AB KT-7185</div>
<svg style="left:151.1px;top:306.5px" width="10" height="7"><path d="M0 3.05C2 -0.95 7 -0.95 9 3.05C7 7.05 2 7.05 0 3.05Z" fill="#0b2b30"/><circle cx="4.5" cy="3.05" r="1.75" fill="none" stroke="#b5c2c4" stroke-width="0.85"/><circle cx="4.6" cy="3.05" r="1" fill="#0b2b30"/></svg>
<div class="t" style="left:178.95px;top:305.00px;font-size:7px;color:#444;">3</div>
<div class="cell" style="left:282.0px;top:299.70px"></div>
<div class="cell" style="left:302.0px;top:299.70px"></div>
<div class="cell" style="left:322.0px;top:299.70px"></div>
<div class="cell" style="left:342.0px;top:299.70px"></div>
<div class="cell" style="left:362.0px;top:299.70px"></div>
<div class="cell" style="left:382.0px;top:299.70px"></div>
<div class="cell" style="left:402.0px;top:299.70px"></div>
<div class="cell" style="left:422.0px;top:299.70px"></div>
<div class="cell" style="left:442.0px;top:299.70px"></div>
<div class="cell" style="left:462.0px;top:299.70px"></div>
<div class="cell" style="left:482.0px;top:299.70px"></div>
<div class="cell" style="left:502.0px;top:299.70px"></div>
<div class="cell" style="left:522.0px;top:299.70px"></div>
<div class="cell" style="left:542.0px;top:299.70px"></div>
<div class="cell" style="left:562.0px;top:299.70px"></div>
<div class="cell" style="left:582.0px;top:299.70px"></div>
<div class="cell" style="left:602.0px;top:299.70px"></div>
<div class="cell" style="left:622.0px;top:299.70px"></div>
<div class="cell" style="left:642.0px;top:299.70px"></div>
<div class="cell" style="left:662.0px;top:299.70px"></div>
<div class="cell" style="left:682.0px;top:299.70px"></div>
<div class="cell" style="left:702.0px;top:299.70px"></div>
<div class="cell" style="left:722.0px;top:299.70px"></div>
<div class="cell" style="left:742.0px;top:299.70px"></div>
<div class="cell" style="left:762.0px;top:299.70px"></div>
<div class="cell" style="left:782.0px;top:299.70px"></div>
<div class="cell" style="left:802.0px;top:299.70px"></div>
<div class="cell" style="left:822.0px;top:299.70px"></div>
<div class="a" style="left:0px;top:323px;width:832px;height:1px;background:#e6e6e6"></div>
<div class="t" style="left:11.80px;top:336.00px;font-size:7.1px;color:#3e3e3c;transform:scaleX(1.0266);transform-origin:0 0;">AB Live rail Test Bundle</div>
<svg style="left:151.1px;top:335.86px" width="10" height="7"><path d="M0 3.05C2 -0.95 7 -0.95 9 3.05C7 7.05 2 7.05 0 3.05Z" fill="#0b2b30"/><circle cx="4.5" cy="3.05" r="1.75" fill="none" stroke="#b5c2c4" stroke-width="0.85"/><circle cx="4.6" cy="3.05" r="1" fill="#0b2b30"/></svg>
<div class="t" style="left:178.95px;top:335.00px;font-size:7px;color:#444;">5</div>
<div class="ce" style="left:282.3px;top:329.06px"><span>E</span></div>
<div class="ce" style="left:302.3px;top:329.06px"><span>E</span></div>
<div class="ce" style="left:322.3px;top:329.06px"><span>E</span></div>
<div class="ce" style="left:342.3px;top:329.06px"><span>E</span></div>
<div class="ce" style="left:362.3px;top:329.06px"><span>E</span></div>
<div class="ce" style="left:382.3px;top:329.06px"><span>E</span></div>
<div class="ce" style="left:402.3px;top:329.06px"><span>E</span></div>
<div class="ce" style="left:422.3px;top:329.06px"><span>E</span></div>
<div class="ce" style="left:442.3px;top:329.06px"><span>E</span></div>
<div class="ce" style="left:462.3px;top:329.06px"><span>E</span></div>
<div class="ce" style="left:482.3px;top:329.06px"><span>E</span></div>
<div class="ce" style="left:502.3px;top:329.06px"><span>E</span></div>
<div class="ce" style="left:522.3px;top:329.06px"><span>E</span></div>
<div class="ce" style="left:542.3px;top:329.06px"><span>E</span></div>
<div class="ce" style="left:562.3px;top:329.06px"><span>E</span></div>
<div class="ce" style="left:582.3px;top:329.06px"><span>E</span></div>
<div class="ce" style="left:602.3px;top:329.06px"><span>E</span></div>
<div class="ce" style="left:622.3px;top:329.06px"><span>E</span></div>
<div class="ce" style="left:642.3px;top:329.06px"><span>E</span></div>
<div class="ce" style="left:662.3px;top:329.06px"><span>E</span></div>
<div class="ce" style="left:682.3px;top:329.06px"><span>E</span></div>
<div class="ce" style="left:702.3px;top:329.06px"><span>E</span></div>
<div class="ce" style="left:722.3px;top:329.06px"><span>E</span></div>
<div class="ce" style="left:742.3px;top:329.06px"><span>E</span></div>
<div class="ce" style="left:762.3px;top:329.06px"><span>E</span></div>
<div class="ce" style="left:782.3px;top:329.06px"><span>E</span></div>
<div class="ce" style="left:802.3px;top:329.06px"><span>E</span></div>
<div class="ce" style="left:822.3px;top:329.06px"><span>E</span></div>
<svg style="left:293.7px;top:325.76px" width="9" height="8"><path d="M4.1 0L8.3 6.6H0Z" fill="#b10f2c"/><path d="M4.1 1.8L6.2 5.6H2Z" fill="#d0344f"/></svg>
<svg style="left:313.7px;top:325.76px" width="9" height="8"><path d="M4.1 0L8.3 6.6H0Z" fill="#b10f2c"/><path d="M4.1 1.8L6.2 5.6H2Z" fill="#d0344f"/></svg>
<svg style="left:333.7px;top:325.76px" width="9" height="8"><path d="M4.1 0L8.3 6.6H0Z" fill="#b10f2c"/><path d="M4.1 1.8L6.2 5.6H2Z" fill="#d0344f"/></svg>
<svg style="left:353.7px;top:325.76px" width="9" height="8"><path d="M4.1 0L8.3 6.6H0Z" fill="#b10f2c"/><path d="M4.1 1.8L6.2 5.6H2Z" fill="#d0344f"/></svg>
<svg style="left:373.7px;top:325.76px" width="9" height="8"><path d="M4.1 0L8.3 6.6H0Z" fill="#b10f2c"/><path d="M4.1 1.8L6.2 5.6H2Z" fill="#d0344f"/></svg>
<svg style="left:393.7px;top:325.76px" width="9" height="8"><path d="M4.1 0L8.3 6.6H0Z" fill="#b10f2c"/><path d="M4.1 1.8L6.2 5.6H2Z" fill="#d0344f"/></svg>
<svg style="left:413.7px;top:325.76px" width="9" height="8"><path d="M4.1 0L8.3 6.6H0Z" fill="#b10f2c"/><path d="M4.1 1.8L6.2 5.6H2Z" fill="#d0344f"/></svg>
<svg style="left:433.7px;top:325.76px" width="9" height="8"><path d="M4.1 0L8.3 6.6H0Z" fill="#b10f2c"/><path d="M4.1 1.8L6.2 5.6H2Z" fill="#d0344f"/></svg>
<svg style="left:453.7px;top:325.76px" width="9" height="8"><path d="M4.1 0L8.3 6.6H0Z" fill="#b10f2c"/><path d="M4.1 1.8L6.2 5.6H2Z" fill="#d0344f"/></svg>
<svg style="left:473.7px;top:325.76px" width="9" height="8"><path d="M4.1 0L8.3 6.6H0Z" fill="#b10f2c"/><path d="M4.1 1.8L6.2 5.6H2Z" fill="#d0344f"/></svg>
<svg style="left:493.7px;top:325.76px" width="9" height="8"><path d="M4.1 0L8.3 6.6H0Z" fill="#b10f2c"/><path d="M4.1 1.8L6.2 5.6H2Z" fill="#d0344f"/></svg>
<svg style="left:513.7px;top:325.76px" width="9" height="8"><path d="M4.1 0L8.3 6.6H0Z" fill="#b10f2c"/><path d="M4.1 1.8L6.2 5.6H2Z" fill="#d0344f"/></svg>
<svg style="left:533.7px;top:325.76px" width="9" height="8"><path d="M4.1 0L8.3 6.6H0Z" fill="#b10f2c"/><path d="M4.1 1.8L6.2 5.6H2Z" fill="#d0344f"/></svg>
<svg style="left:553.7px;top:325.76px" width="9" height="8"><path d="M4.1 0L8.3 6.6H0Z" fill="#b10f2c"/><path d="M4.1 1.8L6.2 5.6H2Z" fill="#d0344f"/></svg>
<svg style="left:573.7px;top:325.76px" width="9" height="8"><path d="M4.1 0L8.3 6.6H0Z" fill="#b10f2c"/><path d="M4.1 1.8L6.2 5.6H2Z" fill="#d0344f"/></svg>
<svg style="left:593.7px;top:325.76px" width="9" height="8"><path d="M4.1 0L8.3 6.6H0Z" fill="#b10f2c"/><path d="M4.1 1.8L6.2 5.6H2Z" fill="#d0344f"/></svg>
<svg style="left:613.7px;top:325.76px" width="9" height="8"><path d="M4.1 0L8.3 6.6H0Z" fill="#b10f2c"/><path d="M4.1 1.8L6.2 5.6H2Z" fill="#d0344f"/></svg>
<svg style="left:633.7px;top:325.76px" width="9" height="8"><path d="M4.1 0L8.3 6.6H0Z" fill="#b10f2c"/><path d="M4.1 1.8L6.2 5.6H2Z" fill="#d0344f"/></svg>
<svg style="left:653.7px;top:325.76px" width="9" height="8"><path d="M4.1 0L8.3 6.6H0Z" fill="#b10f2c"/><path d="M4.1 1.8L6.2 5.6H2Z" fill="#d0344f"/></svg>
<svg style="left:673.7px;top:325.76px" width="9" height="8"><path d="M4.1 0L8.3 6.6H0Z" fill="#b10f2c"/><path d="M4.1 1.8L6.2 5.6H2Z" fill="#d0344f"/></svg>
<svg style="left:693.7px;top:325.76px" width="9" height="8"><path d="M4.1 0L8.3 6.6H0Z" fill="#b10f2c"/><path d="M4.1 1.8L6.2 5.6H2Z" fill="#d0344f"/></svg>
<svg style="left:713.7px;top:325.76px" width="9" height="8"><path d="M4.1 0L8.3 6.6H0Z" fill="#b10f2c"/><path d="M4.1 1.8L6.2 5.6H2Z" fill="#d0344f"/></svg>
<svg style="left:733.7px;top:325.76px" width="9" height="8"><path d="M4.1 0L8.3 6.6H0Z" fill="#b10f2c"/><path d="M4.1 1.8L6.2 5.6H2Z" fill="#d0344f"/></svg>
<svg style="left:753.7px;top:325.76px" width="9" height="8"><path d="M4.1 0L8.3 6.6H0Z" fill="#b10f2c"/><path d="M4.1 1.8L6.2 5.6H2Z" fill="#d0344f"/></svg>
<svg style="left:773.7px;top:325.76px" width="9" height="8"><path d="M4.1 0L8.3 6.6H0Z" fill="#b10f2c"/><path d="M4.1 1.8L6.2 5.6H2Z" fill="#d0344f"/></svg>
<svg style="left:793.7px;top:325.76px" width="9" height="8"><path d="M4.1 0L8.3 6.6H0Z" fill="#b10f2c"/><path d="M4.1 1.8L6.2 5.6H2Z" fill="#d0344f"/></svg>
<svg style="left:813.7px;top:325.76px" width="9" height="8"><path d="M4.1 0L8.3 6.6H0Z" fill="#b10f2c"/><path d="M4.1 1.8L6.2 5.6H2Z" fill="#d0344f"/></svg>
<svg style="left:833.7px;top:325.76px" width="9" height="8"><path d="M4.1 0L8.3 6.6H0Z" fill="#b10f2c"/><path d="M4.1 1.8L6.2 5.6H2Z" fill="#d0344f"/></svg>
</div>
</body></html>
